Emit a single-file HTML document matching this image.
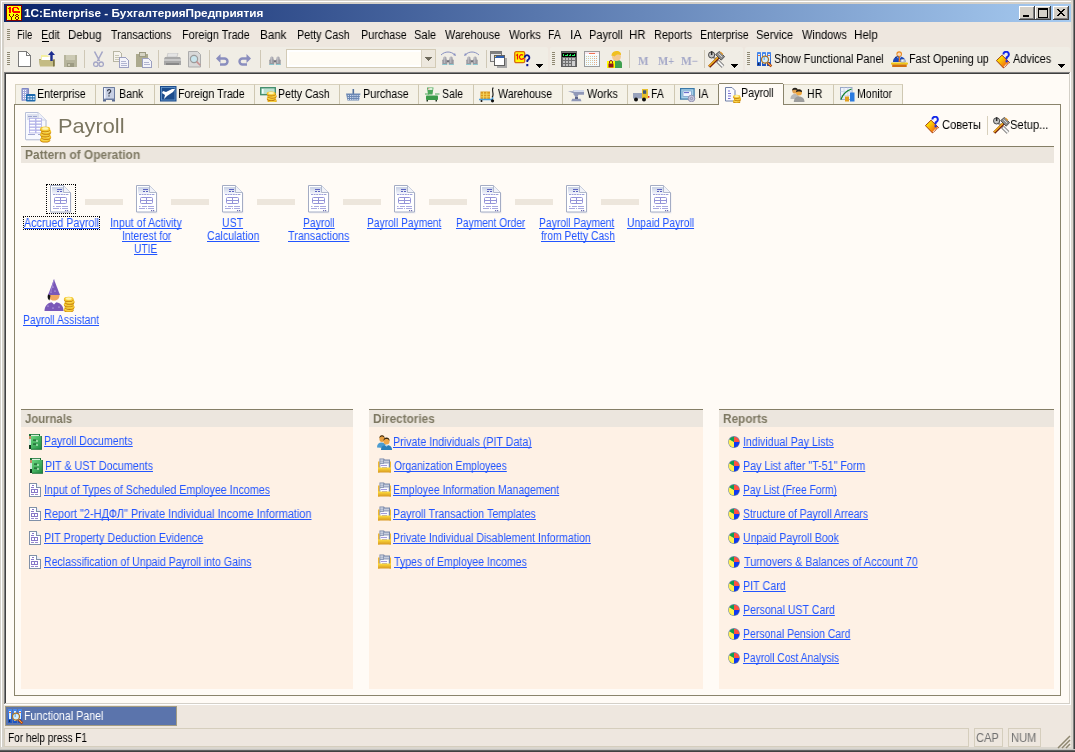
<!DOCTYPE html>
<html><head><meta charset="utf-8"><title>1C:Enterprise</title>
<style>
html,body{margin:0;padding:0;width:1075px;height:752px;overflow:hidden;background:#D4D0C8}
body>div,body>svg{position:absolute}
.t{font-family:"Liberation Sans", sans-serif;white-space:pre;transform-origin:0 0;will-change:transform;text-decoration-skip-ink:none}
</style></head><body>
<div style="left:0px;top:0px;width:1075px;height:752px;background:#D4D0C8"></div>
<div style="left:1px;top:1px;width:1073px;height:750px;background:#FFFFFF"></div>
<div style="left:2px;top:2px;width:1071px;height:748px;background:#D4D0C8"></div>
<div style="left:4px;top:4px;width:1067px;height:743px;background:#EEE7DF"></div>
<div style="left:1071px;top:1px;width:2px;height:749px;background:#DAD6CE"></div>
<div style="left:1px;top:747px;width:1072px;height:2px;background:#DAD6CE"></div>
<div style="left:1073px;top:0px;width:1px;height:752px;background:#808080"></div>
<div style="left:1074px;top:0px;width:1px;height:752px;background:#404040"></div>
<div style="left:0px;top:749px;width:1075px;height:1px;background:#C4C4C0"></div>
<div style="left:0px;top:750px;width:1075px;height:1px;background:#606060"></div>
<div style="left:0px;top:751px;width:1075px;height:1px;background:#404040"></div>
<div style="left:4px;top:4px;width:1067px;height:18px;background:linear-gradient(to right,#0A246A,#A6CAF0)"></div>
<svg style="left:6px;top:5px" width="16" height="16" viewBox="0 0 16 16" shape-rendering="crispEdges"><rect x="0" y="0" width="16" height="16" fill="#800000"/><rect x="1" y="1" width="14" height="14" fill="#FFFF00"/><rect x="1" y="1" width="1" height="1" fill="#C8D8E8"/><rect x="14" y="1" width="1" height="1" fill="#C8D8E8"/><rect x="1" y="14" width="1" height="1" fill="#C8D8E8"/><rect x="14" y="14" width="1" height="1" fill="#C8D8E8"/><rect x="2" y="3" width="1" height="1" fill="#FF0000"/><rect x="3" y="2" width="2" height="6" fill="#FF0000"/><rect x="7" y="2" width="5" height="1" fill="#FF0000"/><rect x="6" y="3" width="2" height="3" fill="#FF0000"/><rect x="11" y="3" width="2" height="1" fill="#FF0000"/><rect x="12" y="4" width="1" height="1" fill="#FF0000"/><rect x="6" y="6" width="8" height="1" fill="#FF0000"/><rect x="7" y="7" width="7" height="1" fill="#FF0000"/><rect x="3" y="9" width="1" height="2" fill="#800000"/><rect x="7" y="9" width="1" height="2" fill="#800000"/><rect x="4" y="11" width="1" height="1" fill="#800000"/><rect x="6" y="11" width="1" height="1" fill="#800000"/><rect x="5" y="12" width="1" height="3" fill="#800000"/><rect x="10" y="9" width="2" height="1" fill="#800000"/><rect x="9" y="10" width="1" height="1" fill="#800000"/><rect x="12" y="10" width="1" height="1" fill="#800000"/><rect x="10" y="11" width="2" height="1" fill="#800000"/><rect x="9" y="12" width="1" height="2" fill="#800000"/><rect x="12" y="12" width="1" height="2" fill="#800000"/><rect x="10" y="14" width="2" height="1" fill="#800000"/></svg>
<div class="t" style="left:23.93px;top:7px;font-size:11px;font-weight:700;line-height:13px;transform:scaleX(1.0685);color:#FFFFFF;">1C:Enterprise - БухгалтерияПредприятия</div>
<div style="left:1019px;top:6px;width:16px;height:14px;background:#404040"></div>
<div style="left:1019px;top:6px;width:15px;height:13px;background:#FFFFFF"></div>
<div style="left:1020px;top:7px;width:14px;height:12px;background:#808080"></div>
<div style="left:1020px;top:7px;width:13px;height:11px;background:#D4D0C8"></div>
<div style="left:1035px;top:6px;width:16px;height:14px;background:#404040"></div>
<div style="left:1035px;top:6px;width:15px;height:13px;background:#FFFFFF"></div>
<div style="left:1036px;top:7px;width:14px;height:12px;background:#808080"></div>
<div style="left:1036px;top:7px;width:13px;height:11px;background:#D4D0C8"></div>
<div style="left:1053px;top:6px;width:16px;height:14px;background:#404040"></div>
<div style="left:1053px;top:6px;width:15px;height:13px;background:#FFFFFF"></div>
<div style="left:1054px;top:7px;width:14px;height:12px;background:#808080"></div>
<div style="left:1054px;top:7px;width:13px;height:11px;background:#D4D0C8"></div>
<div style="left:1023px;top:15px;width:6px;height:2px;background:#000"></div>
<svg style="left:1035px;top:6px" width="16" height="14" viewBox="0 0 16 14" shape-rendering="crispEdges"><rect x="3" y="2" width="9" height="9" fill="none" stroke="#000" stroke-width="1" transform="translate(0.5 0.5)"/><rect x="3" y="2" width="10" height="2" fill="#000"/></svg>
<svg style="left:1053px;top:6px" width="16" height="14" viewBox="0 0 16 14" shape-rendering="crispEdges"><rect x="4" y="3" width="1" height="1" fill="#000"/><rect x="5" y="3" width="1" height="1" fill="#000"/><rect x="10" y="3" width="1" height="1" fill="#000"/><rect x="11" y="3" width="1" height="1" fill="#000"/><rect x="5" y="4" width="1" height="1" fill="#000"/><rect x="6" y="4" width="1" height="1" fill="#000"/><rect x="9" y="4" width="1" height="1" fill="#000"/><rect x="10" y="4" width="1" height="1" fill="#000"/><rect x="6" y="5" width="1" height="1" fill="#000"/><rect x="7" y="5" width="1" height="1" fill="#000"/><rect x="8" y="5" width="1" height="1" fill="#000"/><rect x="9" y="5" width="1" height="1" fill="#000"/><rect x="7" y="6" width="1" height="1" fill="#000"/><rect x="8" y="6" width="1" height="1" fill="#000"/><rect x="6" y="7" width="1" height="1" fill="#000"/><rect x="7" y="7" width="1" height="1" fill="#000"/><rect x="8" y="7" width="1" height="1" fill="#000"/><rect x="9" y="7" width="1" height="1" fill="#000"/><rect x="5" y="8" width="1" height="1" fill="#000"/><rect x="6" y="8" width="1" height="1" fill="#000"/><rect x="9" y="8" width="1" height="1" fill="#000"/><rect x="10" y="8" width="1" height="1" fill="#000"/><rect x="4" y="9" width="1" height="1" fill="#000"/><rect x="5" y="9" width="1" height="1" fill="#000"/><rect x="10" y="9" width="1" height="1" fill="#000"/><rect x="11" y="9" width="1" height="1" fill="#000"/></svg>
<svg style="left:7px;top:29px" width="3" height="12" viewBox="0 0 3 12" shape-rendering="crispEdges"><rect x="0" y="0" width="3" height="1" fill="#8E8872"/><rect x="0" y="2" width="3" height="1" fill="#8E8872"/><rect x="0" y="4" width="3" height="1" fill="#8E8872"/><rect x="0" y="6" width="3" height="1" fill="#8E8872"/><rect x="0" y="8" width="3" height="1" fill="#8E8872"/><rect x="0" y="10" width="3" height="1" fill="#8E8872"/></svg>
<div class="t" style="left:17.21px;top:28px;font-size:12px;font-weight:400;line-height:14px;transform:scaleX(0.7889);color:#000;">File</div>
<div class="t" style="left:41.09px;top:28px;font-size:12px;font-weight:400;line-height:14px;transform:scaleX(0.9100);color:#000;">Edit</div>
<div class="t" style="left:68.05px;top:28px;font-size:12px;font-weight:400;line-height:14px;transform:scaleX(0.9471);color:#000;">Debug</div>
<div class="t" style="left:111.00px;top:28px;font-size:12px;font-weight:400;line-height:14px;transform:scaleX(0.8853);color:#000;">Transactions</div>
<div class="t" style="left:182.09px;top:28px;font-size:12px;font-weight:400;line-height:14px;transform:scaleX(0.9068);color:#000;">Foreign Trade</div>
<div class="t" style="left:260.03px;top:28px;font-size:12px;font-weight:400;line-height:14px;transform:scaleX(0.9692);color:#000;">Bank</div>
<div class="t" style="left:297.10px;top:28px;font-size:12px;font-weight:400;line-height:14px;transform:scaleX(0.8982);color:#000;">Petty Cash</div>
<div class="t" style="left:361.10px;top:28px;font-size:12px;font-weight:400;line-height:14px;transform:scaleX(0.9020);color:#000;">Purchase</div>
<div class="t" style="left:414.08px;top:28px;font-size:12px;font-weight:400;line-height:14px;transform:scaleX(0.9217);color:#000;">Sale</div>
<div class="t" style="left:445.00px;top:28px;font-size:12px;font-weight:400;line-height:14px;transform:scaleX(0.9049);color:#000;">Warehouse</div>
<div class="t" style="left:509.00px;top:28px;font-size:12px;font-weight:400;line-height:14px;transform:scaleX(0.9455);color:#000;">Works</div>
<div class="t" style="left:548.13px;top:28px;font-size:12px;font-weight:400;line-height:14px;transform:scaleX(0.8714);color:#000;">FA</div>
<div class="t" style="left:569.98px;top:28px;font-size:12px;font-weight:400;line-height:14px;transform:scaleX(1.0200);color:#000;">IA</div>
<div class="t" style="left:589.08px;top:28px;font-size:12px;font-weight:400;line-height:14px;transform:scaleX(0.9200);color:#000;">Payroll</div>
<div class="t" style="left:629.05px;top:28px;font-size:12px;font-weight:400;line-height:14px;transform:scaleX(0.9500);color:#000;">HR</div>
<div class="t" style="left:654.09px;top:28px;font-size:12px;font-weight:400;line-height:14px;transform:scaleX(0.9073);color:#000;">Reports</div>
<div class="t" style="left:700.11px;top:28px;font-size:12px;font-weight:400;line-height:14px;transform:scaleX(0.8906);color:#000;">Enterprise</div>
<div class="t" style="left:756.07px;top:28px;font-size:12px;font-weight:400;line-height:14px;transform:scaleX(0.9282);color:#000;">Service</div>
<div class="t" style="left:802.00px;top:28px;font-size:12px;font-weight:400;line-height:14px;transform:scaleX(0.9208);color:#000;">Windows</div>
<div class="t" style="left:854.03px;top:28px;font-size:12px;font-weight:400;line-height:14px;transform:scaleX(0.9652);color:#000;">Help</div>
<div style="left:42px;top:41px;width:7px;height:1px;background:#000"></div>
<div style="left:4px;top:47px;width:544px;height:24px;background:#F0EDE5;border-radius:2px"></div>
<div style="left:550px;top:47px;width:193px;height:24px;background:#F0EDE5;border-radius:2px"></div>
<div style="left:745px;top:47px;width:325px;height:24px;background:#F0EDE5;border-radius:2px"></div>
<svg style="left:7px;top:52px" width="3" height="14" viewBox="0 0 3 14" shape-rendering="crispEdges"><rect x="0" y="0" width="3" height="1" fill="#8E8872"/><rect x="0" y="2" width="3" height="1" fill="#8E8872"/><rect x="0" y="4" width="3" height="1" fill="#8E8872"/><rect x="0" y="6" width="3" height="1" fill="#8E8872"/><rect x="0" y="8" width="3" height="1" fill="#8E8872"/><rect x="0" y="10" width="3" height="1" fill="#8E8872"/><rect x="0" y="12" width="3" height="1" fill="#8E8872"/></svg>
<svg style="left:552px;top:52px" width="3" height="14" viewBox="0 0 3 14" shape-rendering="crispEdges"><rect x="0" y="0" width="3" height="1" fill="#8E8872"/><rect x="0" y="2" width="3" height="1" fill="#8E8872"/><rect x="0" y="4" width="3" height="1" fill="#8E8872"/><rect x="0" y="6" width="3" height="1" fill="#8E8872"/><rect x="0" y="8" width="3" height="1" fill="#8E8872"/><rect x="0" y="10" width="3" height="1" fill="#8E8872"/><rect x="0" y="12" width="3" height="1" fill="#8E8872"/></svg>
<svg style="left:747px;top:52px" width="3" height="14" viewBox="0 0 3 14" shape-rendering="crispEdges"><rect x="0" y="0" width="3" height="1" fill="#8E8872"/><rect x="0" y="2" width="3" height="1" fill="#8E8872"/><rect x="0" y="4" width="3" height="1" fill="#8E8872"/><rect x="0" y="6" width="3" height="1" fill="#8E8872"/><rect x="0" y="8" width="3" height="1" fill="#8E8872"/><rect x="0" y="10" width="3" height="1" fill="#8E8872"/><rect x="0" y="12" width="3" height="1" fill="#8E8872"/></svg>
<div style="left:4px;top:72px;width:1067px;height:1px;background:#808080"></div>
<div style="left:4px;top:73px;width:1067px;height:1px;background:#404040"></div>
<svg style="left:18px;top:51px" width="13" height="16" viewBox="0 0 13 16" shape-rendering="crispEdges"><path d="M0.5 0.5h8l3.5 3.5v11.5H0.5z" fill="#FFF" stroke="#7A7A7A"/><path d="M8.5 0.5v3.5h3.5" fill="none" stroke="#7A7A7A"/></svg>
<svg style="left:39px;top:51px" width="17" height="16" viewBox="0 0 17 16"><path d="M0 8h13v7H1z" fill="#A8A070"/><path d="M2 4h6l2 2h3v3H2z" fill="#F4F0A0"/><path d="M3 6h8v4H3z" fill="#FFFFFF"/><path d="M0 9h14l2 -1v7l-2 0.5H1z" fill="#C4BC84"/><path d="M14 8.5h1.6v7H14z" fill="#7C7448"/><path d="M12.5 0l3.5 4h-2.3v6h-2.4V4H9z" fill="#1C2C90"/></svg>
<svg style="left:64px;top:55px" width="13" height="13" viewBox="0 0 13 13" shape-rendering="crispEdges"><rect x="0" y="0" width="13" height="12" fill="#B6B49C"/><rect x="2" y="0" width="9" height="5" fill="#CCCAB4"/><rect x="3" y="8" width="7" height="4" fill="#9C9A82"/><rect x="4" y="9" width="2" height="2" fill="#CCCAB4"/></svg>
<svg style="left:93px;top:51px" width="11" height="17" viewBox="0 0 11 17"><path d="M1.5 0.5l5 9.5M9.5 0.5l-5 9.5" stroke="#A4A6C6" stroke-width="1.6"/><circle cx="2.8" cy="13.2" r="2.2" fill="none" stroke="#A4A6C6" stroke-width="1.3"/><circle cx="8.2" cy="13.2" r="2.2" fill="none" stroke="#A4A6C6" stroke-width="1.3"/></svg>
<svg style="left:113px;top:51px" width="17" height="17" viewBox="0 0 17 17" shape-rendering="crispEdges"><path d="M0.5 0.5h6l2 2v8h-8z" fill="#F6F4EE" stroke="#B8B6A4"/><path d="M2 4h4M2 6h5M2 8h5" stroke="#C8C6B4"/><path d="M6.5 6.5h6l3 3v7h-9z" fill="#F4F4FA" stroke="#9CA0C0"/><path d="M8 10h5M8 12h6M8 14h6" stroke="#B0B4D0"/></svg>
<svg style="left:136px;top:51px" width="17" height="17" viewBox="0 0 17 17" shape-rendering="crispEdges"><rect x="0" y="3" width="12" height="13" rx="1" fill="#ACAA8E"/><rect x="3" y="1" width="6" height="4" fill="#D6D4C4" stroke="#9C9A82"/><path d="M6.5 7.5h6l3 3v6h-9z" fill="#F4F4FA" stroke="#9CA0C0"/><path d="M8 11h5M8 13h6" stroke="#B0B4D0"/></svg>
<svg style="left:164px;top:53px" width="17" height="14" viewBox="0 0 17 14"><path d="M4 0h10l-1 4H3z" fill="#E4E4E4" stroke="#B8B8B8" stroke-width="0.6"/><path d="M1 4h15l1 2v6H0V6z" fill="#A8A8A8"/><rect x="0" y="6" width="17" height="2" fill="#C8C8C8"/><rect x="2" y="10" width="13" height="2" fill="#888888"/></svg>
<svg style="left:188px;top:51px" width="14" height="17" viewBox="0 0 14 17"><path d="M0.5 0.5h9l3 3v12.5H0.5z" fill="#D8D8D8" stroke="#ACACAC"/><circle cx="6" cy="8" r="3.6" fill="#C8E4EC" stroke="#9A9A9A" stroke-width="1.2"/><path d="M8.6 10.6l3.6 3.6" stroke="#C89090" stroke-width="1.6"/></svg>
<svg style="left:216px;top:53px" width="13" height="13" viewBox="0 0 13 13"><path d="M3 5.5h5.5a3 3 0 0 1 0 6H4" stroke="#8A8EBE" stroke-width="2.4" fill="none"/><path d="M0 5.5L4.5 1v9z" fill="#8A8EBE"/></svg>
<svg style="left:238px;top:53px" width="13" height="13" viewBox="0 0 13 13"><path d="M10 5.5H4.5a3 3 0 0 0 0 6H9" stroke="#8A8EBE" stroke-width="2.4" fill="none"/><path d="M13 5.5L8.5 1v9z" fill="#8A8EBE"/></svg>
<svg style="left:269px;top:56px" width="12" height="9" viewBox="0 0 12 9"><path d="M1.3 4V2a1.6 1.6 0 0 1 3.2 0V4z" fill="#A4A4AC"/><path d="M7.5 4V2a1.6 1.6 0 0 1 3.2 0V4z" fill="#A4A4AC"/><rect x="0.3" y="3.5" width="5" height="5.5" rx="0.8" fill="#98989F"/><rect x="6.7" y="3.5" width="5" height="5.5" rx="0.8" fill="#98989F"/><rect x="5" y="4.3" width="2" height="2" fill="#707078"/><rect x="1.8" y="1" width="1.4" height="6" fill="#C4C4CC" opacity="0.7"/><rect x="8" y="1" width="1.4" height="6" fill="#C4C4CC" opacity="0.7"/><rect x="0.3" y="8" width="4.5" height="1" fill="#88C8D0"/><rect x="7.2" y="8" width="4.5" height="1" fill="#88C8D0"/></svg>
<svg style="left:442px;top:56px" width="12" height="9" viewBox="0 0 12 9"><path d="M1.3 4V2a1.6 1.6 0 0 1 3.2 0V4z" fill="#A4A4AC"/><path d="M7.5 4V2a1.6 1.6 0 0 1 3.2 0V4z" fill="#A4A4AC"/><rect x="0.3" y="3.5" width="5" height="5.5" rx="0.8" fill="#98989F"/><rect x="6.7" y="3.5" width="5" height="5.5" rx="0.8" fill="#98989F"/><rect x="5" y="4.3" width="2" height="2" fill="#707078"/><rect x="1.8" y="1" width="1.4" height="6" fill="#C4C4CC" opacity="0.7"/><rect x="8" y="1" width="1.4" height="6" fill="#C4C4CC" opacity="0.7"/><rect x="0.3" y="8" width="4.5" height="1" fill="#88C8D0"/><rect x="7.2" y="8" width="4.5" height="1" fill="#88C8D0"/></svg>
<svg style="left:466px;top:56px" width="12" height="9" viewBox="0 0 12 9"><path d="M1.3 4V2a1.6 1.6 0 0 1 3.2 0V4z" fill="#A4A4AC"/><path d="M7.5 4V2a1.6 1.6 0 0 1 3.2 0V4z" fill="#A4A4AC"/><rect x="0.3" y="3.5" width="5" height="5.5" rx="0.8" fill="#98989F"/><rect x="6.7" y="3.5" width="5" height="5.5" rx="0.8" fill="#98989F"/><rect x="5" y="4.3" width="2" height="2" fill="#707078"/><rect x="1.8" y="1" width="1.4" height="6" fill="#C4C4CC" opacity="0.7"/><rect x="8" y="1" width="1.4" height="6" fill="#C4C4CC" opacity="0.7"/><rect x="0.3" y="8" width="4.5" height="1" fill="#88C8D0"/><rect x="7.2" y="8" width="4.5" height="1" fill="#88C8D0"/></svg>
<svg style="left:440px;top:50px" width="17" height="7" viewBox="0 0 17 7"><path d="M1 5c4-4 10-4 14 0" stroke="#8890C0" stroke-width="1" fill="none"/><path d="M16 6l-3-1 2-2z" fill="#8890C0"/></svg>
<svg style="left:463px;top:50px" width="17" height="7" viewBox="0 0 17 7"><path d="M2 5c4-4 10-4 14 0" stroke="#8890C0" stroke-width="1" fill="none"/><path d="M1 6l3-1-2-2z" fill="#8890C0"/></svg>
<div style="left:286px;top:49px;width:150px;height:19px;background:#D3CBB6"></div>
<div style="left:287px;top:50px;width:148px;height:17px;background:#FFFFFF"></div>
<div style="left:289px;top:52px;width:132px;height:13px;background:#FFFCF5"></div>
<div style="left:421px;top:50px;width:14px;height:17px;background:#EDE8DE;border-left:1px solid #D8D2C2;box-sizing:border-box"></div>
<svg style="left:425px;top:57px" width="7" height="4" viewBox="0 0 7 4" shape-rendering="crispEdges"><path d="M0 0h7v1H0zM1 1h5v1H1zM2 2h3v1H2zM3 3h1v1H3z" fill="#6E6A5C"/></svg>
<svg style="left:490px;top:51px" width="18" height="17" viewBox="0 0 18 17" shape-rendering="crispEdges"><rect x="0" y="0" width="11" height="10" fill="#E8E8E8" stroke="#7A7A7A"/><rect x="0.5" y="0.5" width="10" height="2" fill="#808080"/><rect x="4.5" y="4.5" width="10" height="10" fill="#FFFFFF" stroke="#606060"/><rect x="5" y="5" width="9" height="2" fill="#3060B0"/><rect x="5" y="5" width="1" height="1" fill="#F0D040"/><rect x="15" y="7" width="2" height="9" fill="#A8A8A8"/><rect x="7" y="15" width="10" height="2" fill="#A8A8A8"/></svg>
<svg style="left:514px;top:51px" width="18" height="17" viewBox="0 0 18 17"><rect x="0.7" y="0.7" width="10" height="11" rx="1.5" fill="#FFF800" stroke="#D86A10" stroke-width="1.3"/><path d="M2.2 4.5l1.3-1v5" stroke="#F01010" stroke-width="1.2" fill="none"/><path d="M9 4.3a2.2 2.2 0 1 0 0 3.4H10" stroke="#F01010" stroke-width="1.2" fill="none"/><path d="M10.6 6.8a2.4 2.4 0 1 1 4 1.6l-1.3 1.1v1.6" stroke="#0A1890" stroke-width="1.8" fill="none"/><rect x="12.3" y="13" width="2" height="2.2" fill="#0A1890"/></svg>
<svg style="left:536px;top:64px" width="8" height="5" viewBox="0 0 8 5" shape-rendering="crispEdges"><path d="M0 0h7v1H0zM1 1h5v1H1zM2 2h3v1H2zM3 3h1v1H3z" fill="#000"/><path d="M3 4h1v1H3z" fill="#FFF"/></svg>
<svg style="left:561px;top:51px" width="16" height="16" viewBox="0 0 16 16" shape-rendering="crispEdges"><rect x="0" y="0" width="16" height="16" fill="#5C5C5C"/><rect x="1" y="1" width="14" height="14" fill="#707070"/><rect x="1" y="2" width="14" height="4" fill="#000"/><path d="M2 3h1v2H2zM4 4h2v1H4zM6 3h1v2H6zM8 4h1v1H8zM9 3h1v2H9zM11 4h2v1h-2zM13 3h1v2h-1z" fill="#20F060"/><rect x="2" y="7" width="2" height="2" fill="#C0C0C0"/><rect x="5" y="7" width="2" height="2" fill="#C0C0C0"/><rect x="8" y="7" width="2" height="2" fill="#C0C0C0"/><rect x="2" y="10" width="2" height="2" fill="#C0C0C0"/><rect x="5" y="10" width="2" height="2" fill="#C0C0C0"/><rect x="8" y="10" width="2" height="2" fill="#C0C0C0"/><rect x="2" y="13" width="2" height="2" fill="#C0C0C0"/><rect x="5" y="13" width="2" height="2" fill="#C0C0C0"/><rect x="8" y="13" width="2" height="2" fill="#C0C0C0"/><rect x="11" y="7" width="3" height="2" fill="#C0C0C0"/><rect x="11" y="10" width="3" height="5" fill="#D0D0D0"/></svg>
<svg style="left:584px;top:51px" width="16" height="16" viewBox="0 0 16 16" shape-rendering="crispEdges"><rect x="0.5" y="0.5" width="15" height="15" fill="#FFFFFF" stroke="#9A9A9A"/><rect x="1" y="1" width="14" height="2" fill="#F8E8F0"/><path d="M5 2h6" stroke="#F07050"/><rect x="2" y="5" width="1" height="1" fill="#E0B070"/><rect x="4" y="5" width="1" height="1" fill="#E0B070"/><rect x="6" y="5" width="1" height="1" fill="#E0B070"/><rect x="8" y="5" width="1" height="1" fill="#E0B070"/><rect x="10" y="5" width="1" height="1" fill="#F08040"/><rect x="12" y="5" width="1" height="1" fill="#F08040"/><rect x="2" y="7" width="1" height="1" fill="#E0B070"/><rect x="4" y="7" width="1" height="1" fill="#E0B070"/><rect x="6" y="7" width="1" height="1" fill="#E0B070"/><rect x="8" y="7" width="1" height="1" fill="#E0B070"/><rect x="10" y="7" width="1" height="1" fill="#F08040"/><rect x="12" y="7" width="1" height="1" fill="#F08040"/><rect x="2" y="9" width="1" height="1" fill="#E0B070"/><rect x="4" y="9" width="1" height="1" fill="#E0B070"/><rect x="6" y="9" width="1" height="1" fill="#E0B070"/><rect x="8" y="9" width="1" height="1" fill="#E0B070"/><rect x="10" y="9" width="1" height="1" fill="#F08040"/><rect x="12" y="9" width="1" height="1" fill="#F08040"/><rect x="2" y="11" width="1" height="1" fill="#E0B070"/><rect x="4" y="11" width="1" height="1" fill="#E0B070"/><rect x="6" y="11" width="1" height="1" fill="#E0B070"/><rect x="8" y="11" width="1" height="1" fill="#E0B070"/><rect x="10" y="11" width="1" height="1" fill="#F08040"/><rect x="12" y="11" width="1" height="1" fill="#F08040"/><rect x="2" y="13" width="1" height="1" fill="#E0B070"/><rect x="4" y="13" width="1" height="1" fill="#E0B070"/><rect x="6" y="13" width="1" height="1" fill="#E0B070"/><rect x="8" y="13" width="1" height="1" fill="#E0B070"/><rect x="10" y="13" width="1" height="1" fill="#F08040"/><rect x="12" y="13" width="1" height="1" fill="#F08040"/><rect x="1" y="4" width="14" height="11" fill="#D8F4FF" opacity="0.35"/></svg>
<svg style="left:607px;top:51px" width="15" height="17" viewBox="0 0 15 17"><path d="M5 13c0-3 2-4 5-4s5 1 5 4v4H5z" fill="#40A050"/><circle cx="9.5" cy="5.5" r="4.5" fill="#F4C890"/><path d="M4.5 5c0-4 3-5 5.5-5s4.5 2 4 4c-2-1-5-1-6.5 1.5-1 -1-2-1-3-0.5z" fill="#F0C020"/><rect x="0" y="10" width="8" height="7" fill="#FFFF00"/><rect x="1.5" y="12.5" width="5" height="4" fill="#901818"/><path d="M2.5 12.5v-1.5a1.5 1.5 0 0 1 3 0v1.5" stroke="#901818" stroke-width="1" fill="none"/></svg>
<div class="t" style="left:638.00px;top:54px;font-size:12px;font-weight:700;line-height:14px;transform:scaleX(0.9273);color:#A4A8C8;font-family:Liberation Serif,serif">M</div>
<div class="t" style="left:658.00px;top:54px;font-size:12px;font-weight:700;line-height:14px;transform:scaleX(0.9000);color:#A4A8C8;font-family:Liberation Serif,serif">M+</div>
<div class="t" style="left:681.00px;top:54px;font-size:12px;font-weight:700;line-height:14px;transform:scaleX(0.9529);color:#A4A8C8;font-family:Liberation Serif,serif">M−</div>
<svg style="left:708px;top:51px" width="17" height="17" viewBox="0 0 17 17"><path d="M9.5 10l5.5 5.5" stroke="#585858" stroke-width="3.6"/><path d="M9.5 10l5.5 5.5" stroke="#F4F4F4" stroke-width="2.1"/><path d="M5 5.5l5 5" stroke="#9A9A9A" stroke-width="2.2"/><circle cx="3.6" cy="3.9" r="3.1" fill="#C4C4C4" stroke="#4A4A4A" stroke-width="1"/><rect x="2.9" y="0.2" width="1.5" height="3.8" fill="#2A2A2A"/><path d="M1.2 15.8L10.8 6.2" stroke="#701808" stroke-width="3"/><path d="M1 15.2L10.4 5.8" stroke="#E8A820" stroke-width="1.7"/><path d="M7.6 3.6l3.8-3.2 5.2 5.2-3.4 3.6z" fill="#8C8C8C" stroke="#3A3A3A" stroke-width="0.8"/><path d="M10.5 2.5l3.5 3.5" stroke="#D8D8D8" stroke-width="1"/><path d="M12.3 0.9l2.6 2.6" stroke="#E09A30" stroke-width="1.3"/></svg>
<svg style="left:731px;top:64px" width="8" height="5" viewBox="0 0 8 5" shape-rendering="crispEdges"><path d="M0 0h7v1H0zM1 1h5v1H1zM2 2h3v1H2zM3 3h1v1H3z" fill="#000"/><path d="M3 4h1v1H3z" fill="#FFF"/></svg>
<svg style="left:757px;top:52px" width="16" height="16" viewBox="0 0 16 16"><defs><linearGradient id="g1" x1="0" y1="0" x2="0" y2="1"><stop offset="0" stop-color="#4A8CF0"/><stop offset="1" stop-color="#1A50C0"/></linearGradient></defs><rect x="0" y="0" width="4" height="14" rx="0.6" fill="url(#g1)"/><rect x="5" y="0" width="4" height="14" rx="0.6" fill="url(#g1)"/><rect x="10" y="0" width="4" height="14" rx="0.6" fill="url(#g1)"/><rect x="1" y="2" width="2" height="8" fill="#D8F0FF"/><rect x="6" y="2" width="2" height="10" fill="#D8F0FF"/><rect x="11" y="2" width="2" height="8" fill="#D8F0FF"/><rect x="1" y="3" width="2" height="1" fill="#E07040"/><rect x="11" y="3" width="2" height="1" fill="#E07040"/><circle cx="1.5" cy="12" r="0.8" fill="#101010"/><path d="M10.8 10.8l3.6 3.6" stroke="#902800" stroke-width="2.4"/><path d="M11 11l3.2 3.2" stroke="#F8A040" stroke-width="1.2"/><circle cx="8" cy="7.6" r="3.5" fill="#D0ECFF" stroke="#B07420" stroke-width="1.3"/><path d="M7.2 5v3" stroke="#4090D0" stroke-width="0.8"/></svg>
<div class="t" style="left:774.11px;top:52px;font-size:12px;font-weight:400;line-height:14px;transform:scaleX(0.8942);color:#000;">Show Functional Panel</div>
<svg style="left:891px;top:51px" width="17" height="16" viewBox="0 0 17 16"><path d="M2 11c0-4 2.5-5.5 6-5.5s6.5 1.5 6.5 5.5z" fill="#1C48B8"/><path d="M4 6.5c1.2-0.6 2.6-1 4-1" stroke="#0C2880" stroke-width="1" fill="none"/><path d="M7 5.8h2.2l-0.4 1 0.5 4h-1.8l0.5-4z" fill="#F07818"/><path d="M6.2 5.8l1 1.5M10 5.8l-1 1.5" stroke="#A8D0F8" stroke-width="0.8"/><circle cx="8.2" cy="3" r="2.8" fill="#E88A20"/><circle cx="8.2" cy="3.2" r="1.8" fill="#F8D8B8"/><rect x="9.5" y="8" width="5" height="4" rx="1.5" fill="#B0B8C8"/><rect x="10.5" y="9" width="2" height="1.5" fill="#F0F4FF"/><rect x="0" y="11.5" width="17" height="2.2" rx="1" fill="#F0C818"/><rect x="1.2" y="13.5" width="14.5" height="2.5" fill="#D07010"/></svg>
<div class="t" style="left:909.10px;top:52px;font-size:12px;font-weight:400;line-height:14px;transform:scaleX(0.8989);color:#000;">Fast Opening up</div>
<svg style="left:996px;top:51px" width="15" height="18" viewBox="0 0 15 18"><defs><linearGradient id="advg996" x1="0" y1="0" x2="1" y2="1"><stop offset="0.15" stop-color="#FFF200"/><stop offset="0.85" stop-color="#F05A10"/></linearGradient></defs><path d="M0.4 9.6L6 4.2l7.6 7.4-6.2 5.3z" fill="url(#advg996)" stroke="#9A3008" stroke-width="0.9"/><path d="M8 15.6l4.8-4" stroke="#FFFFFF" stroke-width="1.2" stroke-dasharray="0.9 0.8"/><path d="M7.4 3.4a2.7 2.7 0 1 1 4.5 2l-1.3 1.1v1.7" stroke="#1428E8" stroke-width="2" fill="none"/><rect x="9.6" y="9.2" width="2.1" height="2.1" fill="#1428E8"/></svg>
<div class="t" style="left:1013.00px;top:52px;font-size:12px;font-weight:400;line-height:14px;transform:scaleX(0.9095);color:#000;">Advices</div>
<svg style="left:1058px;top:64px" width="8" height="5" viewBox="0 0 8 5" shape-rendering="crispEdges"><path d="M0 0h7v1H0zM1 1h5v1H1zM2 2h3v1H2zM3 3h1v1H3z" fill="#000"/><path d="M3 4h1v1H3z" fill="#FFF"/></svg>
<div style="left:84px;top:50px;width:1px;height:18px;background:#CFC8B6"></div>
<div style="left:158px;top:50px;width:1px;height:18px;background:#CFC8B6"></div>
<div style="left:209px;top:50px;width:1px;height:18px;background:#CFC8B6"></div>
<div style="left:260px;top:50px;width:1px;height:18px;background:#CFC8B6"></div>
<div style="left:486px;top:50px;width:1px;height:18px;background:#CFC8B6"></div>
<div style="left:629px;top:50px;width:1px;height:18px;background:#CFC8B6"></div>
<div style="left:704px;top:50px;width:1px;height:18px;background:#CFC8B6"></div>
<div style="left:4px;top:72px;width:1px;height:633px;background:#808080"></div>
<div style="left:5px;top:73px;width:1px;height:631px;background:#404040"></div>
<div style="left:4px;top:704px;width:1067px;height:1px;background:#FFFFFF"></div>
<div style="left:5px;top:703px;width:1065px;height:1px;background:#D4D0C8"></div>
<div style="left:1070px;top:72px;width:1px;height:633px;background:#FFFFFF"></div>
<div style="left:1069px;top:73px;width:1px;height:631px;background:#D4D0C8"></div>
<div style="left:6px;top:74px;width:1063px;height:629px;background:#FFFBF6"></div>
<div style="left:14px;top:104px;width:1047px;height:592px;border:1px solid #8A846C;box-sizing:border-box;background:#FFFBF6"></div>
<div style="left:16px;top:84px;width:80px;height:20px;background:#F5F2E8;border-top:1px solid #D8D1BD;border-right:1px solid #CFC8B2;box-sizing:border-box"></div>
<div class="t" style="left:37.11px;top:87px;font-size:12px;font-weight:400;line-height:14px;transform:scaleX(0.8906);color:#000;">Enterprise</div>
<div style="left:96px;top:84px;width:59px;height:20px;background:#F5F2E8;border-top:1px solid #D8D1BD;border-right:1px solid #CFC8B2;box-sizing:border-box"></div>
<div class="t" style="left:119.11px;top:87px;font-size:12px;font-weight:400;line-height:14px;transform:scaleX(0.8923);color:#000;">Bank</div>
<div style="left:155px;top:84px;width:100px;height:20px;background:#F5F2E8;border-top:1px solid #D8D1BD;border-right:1px solid #CFC8B2;box-sizing:border-box"></div>
<div class="t" style="left:178.11px;top:87px;font-size:12px;font-weight:400;line-height:14px;transform:scaleX(0.8932);color:#000;">Foreign Trade</div>
<div style="left:255px;top:84px;width:85px;height:20px;background:#F5F2E8;border-top:1px solid #D8D1BD;border-right:1px solid #CFC8B2;box-sizing:border-box"></div>
<div class="t" style="left:278.12px;top:87px;font-size:12px;font-weight:400;line-height:14px;transform:scaleX(0.8807);color:#000;">Petty Cash</div>
<div style="left:340px;top:84px;width:79px;height:20px;background:#F5F2E8;border-top:1px solid #D8D1BD;border-right:1px solid #CFC8B2;box-sizing:border-box"></div>
<div class="t" style="left:363.10px;top:87px;font-size:12px;font-weight:400;line-height:14px;transform:scaleX(0.9020);color:#000;">Purchase</div>
<div style="left:419px;top:84px;width:55px;height:20px;background:#F5F2E8;border-top:1px solid #D8D1BD;border-right:1px solid #CFC8B2;box-sizing:border-box"></div>
<div class="t" style="left:442.12px;top:87px;font-size:12px;font-weight:400;line-height:14px;transform:scaleX(0.8783);color:#000;">Sale</div>
<div style="left:474px;top:84px;width:89px;height:20px;background:#F5F2E8;border-top:1px solid #D8D1BD;border-right:1px solid #CFC8B2;box-sizing:border-box"></div>
<div class="t" style="left:498.00px;top:87px;font-size:12px;font-weight:400;line-height:14px;transform:scaleX(0.8885);color:#000;">Warehouse</div>
<div style="left:563px;top:84px;width:65px;height:20px;background:#F5F2E8;border-top:1px solid #D8D1BD;border-right:1px solid #CFC8B2;box-sizing:border-box"></div>
<div class="t" style="left:587.00px;top:87px;font-size:12px;font-weight:400;line-height:14px;transform:scaleX(0.9152);color:#000;">Works</div>
<div style="left:628px;top:84px;width:47px;height:20px;background:#F5F2E8;border-top:1px solid #D8D1BD;border-right:1px solid #CFC8B2;box-sizing:border-box"></div>
<div class="t" style="left:651.13px;top:87px;font-size:12px;font-weight:400;line-height:14px;transform:scaleX(0.8714);color:#000;">FA</div>
<div style="left:675px;top:84px;width:44px;height:20px;background:#F5F2E8;border-top:1px solid #D8D1BD;border-right:1px solid #CFC8B2;box-sizing:border-box"></div>
<div class="t" style="left:698.08px;top:87px;font-size:12px;font-weight:400;line-height:14px;transform:scaleX(0.9200);color:#000;">IA</div>
<div style="left:784px;top:84px;width:50px;height:20px;background:#F5F2E8;border-top:1px solid #D8D1BD;border-right:1px solid #CFC8B2;box-sizing:border-box"></div>
<div class="t" style="left:807.11px;top:87px;font-size:12px;font-weight:400;line-height:14px;transform:scaleX(0.8875);color:#000;">HR</div>
<div style="left:834px;top:84px;width:69px;height:20px;background:#F5F2E8;border-top:1px solid #D8D1BD;border-right:1px solid #CFC8B2;box-sizing:border-box"></div>
<div class="t" style="left:857.12px;top:87px;font-size:12px;font-weight:400;line-height:14px;transform:scaleX(0.8769);color:#000;">Monitor</div>
<div style="left:15px;top:84px;width:1px;height:20px;background:#D8D2BF"></div>
<div style="left:718px;top:83px;width:66px;height:22px;border:1px solid #8A846C;border-bottom:none;box-sizing:border-box;background:#FFFBF6"></div>
<div class="t" style="left:741.11px;top:86px;font-size:12px;font-weight:400;line-height:14px;transform:scaleX(0.8914);color:#000;">Payroll</div>
<div style="left:718px;top:83px;width:1px;height:1px;background:#FFFBF6"></div>
<div style="left:783px;top:83px;width:1px;height:1px;background:#FFFBF6"></div>
<svg style="left:21px;top:88px" width="15" height="14" viewBox="0 0 15 14"><rect x="0.5" y="0" width="7.5" height="13" rx="1" fill="#7F86C4"/><rect x="1.5" y="1" width="5" height="12" fill="#A6ACDA"/><rect x="2" y="2" width="1" height="1" fill="#FFFFFF"/><rect x="4" y="2" width="1" height="1" fill="#FFFFFF"/><rect x="2" y="4" width="1" height="1" fill="#FFFFFF"/><rect x="4" y="4" width="1" height="1" fill="#FFFFFF"/><rect x="2" y="6" width="1" height="1" fill="#FFFFFF"/><rect x="4" y="6" width="1" height="1" fill="#FFFFFF"/><rect x="2" y="8" width="1" height="1" fill="#FFFFFF"/><rect x="4" y="8" width="1" height="1" fill="#FFFFFF"/><rect x="2" y="10" width="1" height="1" fill="#FFFFFF"/><rect x="4" y="10" width="1" height="1" fill="#FFFFFF"/><rect x="5" y="6" width="9.5" height="7.5" rx="1" fill="#1E6AAE"/><rect x="6.5" y="8" width="2" height="1.3" fill="#E8F0FF"/><rect x="9.3" y="8" width="2" height="1.3" fill="#E8F0FF"/><rect x="12" y="8" width="1.6" height="1.3" fill="#E8F0FF"/><rect x="6.5" y="10.5" width="2" height="1.3" fill="#E8F0FF"/><rect x="9.3" y="10.5" width="2" height="1.3" fill="#E8F0FF"/><rect x="12" y="10.5" width="1.6" height="1.3" fill="#E8F0FF"/></svg>
<svg style="left:103px;top:87px" width="13" height="15" viewBox="0 0 13 15"><rect x="0" y="0" width="12" height="13" rx="0.5" fill="#6C7CA0"/><rect x="1" y="1" width="10" height="10.5" fill="#C8D0E4"/><rect x="1" y="1" width="1.5" height="10.5" fill="#F4F6FF"/><path d="M0 13h3v1.5H0zM9 13h3v1.5H9z" fill="#5A6A90"/><path d="M4.5 4.2a1.6 1.6 0 1 1 2.2 1.4l-0.7 0.6v1" stroke="#303848" stroke-width="1.2" fill="none"/><rect x="5.4" y="8.3" width="1.2" height="1.2" fill="#303848"/></svg>
<svg style="left:160px;top:86px" width="17" height="16" viewBox="0 0 17 16"><rect x="0" y="0" width="16.5" height="15.5" fill="#1C4C8C"/><rect x="1.5" y="1.5" width="13.5" height="12.5" fill="none" stroke="#6C9CD0" stroke-width="0.8"/><path d="M3 5l3 1 6-3 3 0-2 3-6 4-3 3 1-4-3-2z" fill="#FFFFFF"/></svg>
<svg style="left:260px;top:87px" width="17" height="15" viewBox="0 0 17 15"><rect x="0.7" y="0.7" width="14.6" height="7" fill="#BCE0D0" stroke="#3E8A6A" stroke-width="1.3"/><rect x="2" y="2" width="1.6" height="4.5" fill="#F4FFFF"/><ellipse cx="12.1" cy="14.2" rx="4.4" ry="2.112" fill="#C07A08"/><ellipse cx="12.1" cy="13.399999999999999" rx="4.4" ry="2.112" fill="#F4C428"/><ellipse cx="12.1" cy="13.2" rx="3.3000000000000003" ry="1.32" fill="#F8DC60"/><ellipse cx="11.2" cy="11.9" rx="4.4" ry="2.112" fill="#C07A08"/><ellipse cx="11.2" cy="11.1" rx="4.4" ry="2.112" fill="#F4C428"/><ellipse cx="11.2" cy="10.9" rx="3.3000000000000003" ry="1.32" fill="#F8DC60"/><ellipse cx="12.1" cy="9.600000000000001" rx="4.4" ry="2.112" fill="#C07A08"/><ellipse cx="12.1" cy="8.8" rx="4.4" ry="2.112" fill="#F4C428"/><ellipse cx="12.1" cy="8.600000000000001" rx="3.3000000000000003" ry="1.32" fill="#F8DC60"/><ellipse cx="11.2" cy="7.3" rx="4.4" ry="2.112" fill="#C07A08"/><ellipse cx="11.2" cy="6.5" rx="4.4" ry="2.112" fill="#F4C428"/><ellipse cx="11.2" cy="6.3" rx="3.3000000000000003" ry="1.32" fill="#F8DC60"/><ellipse cx="11.2" cy="6.1" rx="2.64" ry="1.1" fill="#FFF4B0"/></svg>
<svg style="left:346px;top:89px" width="15" height="12" viewBox="0 0 15 12"><rect x="6.5" y="0" width="1.6" height="6" fill="#52709E"/><path d="M0 4.5h14.5l-1.5 7H1.5z" fill="#6C88B4"/><rect x="1.8" y="6" width="1.2" height="0.9" fill="#D8E4F4"/><rect x="4.0" y="6" width="1.2" height="0.9" fill="#D8E4F4"/><rect x="6.2" y="6" width="1.2" height="0.9" fill="#D8E4F4"/><rect x="8.4" y="6" width="1.2" height="0.9" fill="#D8E4F4"/><rect x="10.600000000000001" y="6" width="1.2" height="0.9" fill="#D8E4F4"/><rect x="12.8" y="6" width="1.2" height="0.9" fill="#D8E4F4"/><rect x="1.8" y="8" width="1.2" height="0.9" fill="#D8E4F4"/><rect x="4.0" y="8" width="1.2" height="0.9" fill="#D8E4F4"/><rect x="6.2" y="8" width="1.2" height="0.9" fill="#D8E4F4"/><rect x="8.4" y="8" width="1.2" height="0.9" fill="#D8E4F4"/><rect x="10.600000000000001" y="8" width="1.2" height="0.9" fill="#D8E4F4"/><rect x="12.8" y="8" width="1.2" height="0.9" fill="#D8E4F4"/><rect x="1.8" y="10" width="1.2" height="0.9" fill="#D8E4F4"/><rect x="4.0" y="10" width="1.2" height="0.9" fill="#D8E4F4"/><rect x="6.2" y="10" width="1.2" height="0.9" fill="#D8E4F4"/><rect x="8.4" y="10" width="1.2" height="0.9" fill="#D8E4F4"/><rect x="10.600000000000001" y="10" width="1.2" height="0.9" fill="#D8E4F4"/><rect x="12.8" y="10" width="1.2" height="0.9" fill="#D8E4F4"/></svg>
<svg style="left:425px;top:87px" width="15" height="15" viewBox="0 0 15 15"><path d="M2 0.5h6.5l-1 7h-4.5z" fill="#4CA85A"/><rect x="3" y="1" width="4.5" height="2" fill="#D8F0D8"/><rect x="3.3" y="1.3" width="0.9" height="0.9" fill="#E04040"/><path d="M0 7h4M10 7h4.5" stroke="#4CA85A" stroke-width="1.2"/><rect x="1" y="8.5" width="12" height="4.5" rx="0.8" fill="#3A9A48"/><rect x="1.5" y="13" width="1.5" height="1.5" fill="#203020"/><rect x="10.5" y="13" width="1.5" height="1.5" fill="#203020"/></svg>
<svg style="left:479px;top:86px" width="16" height="17" viewBox="0 0 16 17"><path d="M14.3 1.5c-1.2 1-1 2 -0.6 4s0.3 5-0.7 6" stroke="#101010" stroke-width="1.1" fill="none"/><rect x="1.5" y="5.5" width="9.5" height="7.5" fill="#D89820"/><path d="M4.5 5.5v7.5M7.8 5.5v7.5M1.5 8.2h9.5M1.5 10.8h9.5" stroke="#F8D860" stroke-width="0.9"/><path d="M0 13.5h13l1-2" stroke="#48A0E0" stroke-width="1.6" fill="none"/><circle cx="2.5" cy="15" r="1" fill="#101010"/><circle cx="13.5" cy="14.8" r="1.6" fill="#101010"/></svg>
<svg style="left:568px;top:89px" width="17" height="13" viewBox="0 0 17 13"><path d="M0 2.2h5.5V1h10.5v4.8H10.5l-1 2.2v1.8h3l1 2.5H3.2l1-2.5h3V8l-1.2-2.2H5.5V4.2z" fill="#9098B8"/><path d="M5.5 1h10.5v2H5.5z" fill="#D4DAEA"/><path d="M7 8h3v2H7z" fill="#5C6488"/></svg>
<svg style="left:633px;top:88px" width="17" height="14" viewBox="0 0 17 14"><rect x="0" y="5" width="9" height="5.5" fill="#98A2BC"/><path d="M9 1h6v9.5H9z" fill="#E8C02C"/><rect x="10" y="2.3" width="3.2" height="3.5" fill="#405878"/><rect x="15" y="8" width="1.4" height="1.8" fill="#E02020"/><circle cx="3" cy="11.5" r="2" fill="#101010"/><circle cx="11" cy="11.5" r="2" fill="#101010"/></svg>
<svg style="left:680px;top:88px" width="16" height="14" viewBox="0 0 16 14"><rect x="0.6" y="0.6" width="13.5" height="10.5" fill="#A8D0E8" stroke="#3A78A8" stroke-width="1.2"/><rect x="3" y="3" width="8.5" height="5.5" fill="#F0F4FF" stroke="#6090C0" stroke-width="0.6"/><path d="M4 4.6h5" stroke="#5050C0" stroke-width="0.9"/><circle cx="11.5" cy="10.5" r="3.3" fill="#C8C8E0" stroke="#8888A8" stroke-width="0.8"/><circle cx="11.5" cy="10.5" r="1.2" fill="none" stroke="#8080A0" stroke-width="0.7"/></svg>
<svg style="left:725px;top:87px" width="16" height="16" viewBox="0 0 16 16"><path d="M0.5 0.5h6.5l3 3v10.5H0.5z" fill="#FAFAFF" stroke="#7080A8"/><path d="M3 4h2M3 6.5h3M3 9h3M3 11.5h2.5" stroke="#7A70D0" stroke-width="1"/><ellipse cx="11.7" cy="14.9" rx="3.6" ry="1.728" fill="#C07A08"/><ellipse cx="11.7" cy="14.1" rx="3.6" ry="1.728" fill="#F4C428"/><ellipse cx="11.7" cy="13.9" rx="2.7" ry="1.08" fill="#F8DC60"/><ellipse cx="12.6" cy="12.600000000000001" rx="3.6" ry="1.728" fill="#C07A08"/><ellipse cx="12.6" cy="11.8" rx="3.6" ry="1.728" fill="#F4C428"/><ellipse cx="12.6" cy="11.600000000000001" rx="2.7" ry="1.08" fill="#F8DC60"/><ellipse cx="11.7" cy="10.3" rx="3.6" ry="1.728" fill="#C07A08"/><ellipse cx="11.7" cy="9.5" rx="3.6" ry="1.728" fill="#F4C428"/><ellipse cx="11.7" cy="9.3" rx="2.7" ry="1.08" fill="#F8DC60"/><ellipse cx="11.7" cy="9.1" rx="2.16" ry="0.9" fill="#FFF4B0"/></svg>
<svg style="left:790px;top:87px" width="15" height="15" viewBox="0 0 15 15"><circle cx="5" cy="3.8" r="2.8" fill="#E0A050"/><path d="M2.2 3.5a2.8 2.8 0 0 1 5.6 0c-1-1-4.6-1-5.6 0z" fill="#202020"/><path d="M0.5 12c0-3.5 2-5 4.5-5s4.5 1.5 4.5 5z" fill="#B8B8B8"/><circle cx="9" cy="5.5" r="3" fill="#F0A840"/><path d="M6 5.2a3 3 0 0 1 6 0c-1-1.1-5-1.1-6 0z" fill="#202020"/><path d="M3.8 15c0-3.8 2.5-5.5 5.2-5.5s5.5 1.7 5.5 5.5z" fill="#9C9C9C"/></svg>
<svg style="left:840px;top:87px" width="15" height="16" viewBox="0 0 15 16"><rect x="0.5" y="0.5" width="11.5" height="12" fill="#EEF2FA" stroke="#9AA8C8"/><path d="M4 0.5v12M7.8 0.5v12M0.5 4.5h11.5M0.5 8.5h11.5" stroke="#C8D4EA" stroke-width="0.8"/><path d="M1 12.5c1.5-5 5-8.5 10.5-10.5" stroke="#108030" stroke-width="1.2" fill="none"/><rect x="5" y="9.5" width="4" height="5" fill="#E0A020"/><rect x="10" y="5.5" width="4.5" height="9" fill="#2A7AE0"/></svg>
<svg style="left:25px;top:112px" width="28" height="31" viewBox="0 0 28 31"><path d="M0.5 0.5h12.5l8 7.5v19.5H0.5z" fill="#F8F9FE" stroke="#B8C0D8"/><path d="M13 0.5v7.5h8" fill="#EEF0F8" stroke="#C8CEE0"/><rect x="2" y="2" width="11" height="6" fill="#DCE0EE"/><path d="M3 4.5h4M8 4.5h4" stroke="#8C94C8" stroke-width="0.8"/><rect x="4.5" y="6.5" width="6" height="2.4" fill="#FFFFFF" stroke="#A8A8E4" stroke-width="0.7"/><rect x="11" y="6.5" width="5.5" height="2.4" fill="#FFFFFF" stroke="#A8A8E4" stroke-width="0.7"/><rect x="4.5" y="9.5" width="6" height="2.4" fill="#FFFFFF" stroke="#A8A8E4" stroke-width="0.7"/><rect x="11" y="9.5" width="5.5" height="2.4" fill="#FFFFFF" stroke="#A8A8E4" stroke-width="0.7"/><rect x="4.5" y="12.5" width="6" height="2.4" fill="#FFFFFF" stroke="#A8A8E4" stroke-width="0.7"/><rect x="11" y="12.5" width="5.5" height="2.4" fill="#FFFFFF" stroke="#A8A8E4" stroke-width="0.7"/><rect x="4.5" y="15.5" width="6" height="2.4" fill="#FFFFFF" stroke="#A8A8E4" stroke-width="0.7"/><rect x="11" y="15.5" width="5.5" height="2.4" fill="#FFFFFF" stroke="#A8A8E4" stroke-width="0.7"/><rect x="4.5" y="18.5" width="6" height="2.4" fill="#FFFFFF" stroke="#A8A8E4" stroke-width="0.7"/><rect x="11" y="18.5" width="5.5" height="2.4" fill="#FFFFFF" stroke="#A8A8E4" stroke-width="0.7"/><path d="M3 22.5h7M13 22.5h3" stroke="#8C94C8" stroke-width="0.8"/><path d="M21 8v20H1" fill="none" stroke="#D0D4E0"/><ellipse cx="20.2" cy="28.2" rx="5" ry="2.4" fill="#C07A08"/><ellipse cx="20.2" cy="27.4" rx="5" ry="2.4" fill="#F4C428"/><ellipse cx="20.2" cy="27.2" rx="3.75" ry="1.5" fill="#F8DC60"/><ellipse cx="21.1" cy="25.6" rx="5" ry="2.4" fill="#C07A08"/><ellipse cx="21.1" cy="24.8" rx="5" ry="2.4" fill="#F4C428"/><ellipse cx="21.1" cy="24.6" rx="3.75" ry="1.5" fill="#F8DC60"/><ellipse cx="20.2" cy="23.0" rx="5" ry="2.4" fill="#C07A08"/><ellipse cx="20.2" cy="22.2" rx="5" ry="2.4" fill="#F4C428"/><ellipse cx="20.2" cy="22.0" rx="3.75" ry="1.5" fill="#F8DC60"/><ellipse cx="21.1" cy="20.400000000000002" rx="5" ry="2.4" fill="#C07A08"/><ellipse cx="21.1" cy="19.6" rx="5" ry="2.4" fill="#F4C428"/><ellipse cx="21.1" cy="19.400000000000002" rx="3.75" ry="1.5" fill="#F8DC60"/><ellipse cx="20.2" cy="17.8" rx="5" ry="2.4" fill="#C07A08"/><ellipse cx="20.2" cy="17.0" rx="5" ry="2.4" fill="#F4C428"/><ellipse cx="20.2" cy="16.8" rx="3.75" ry="1.5" fill="#F8DC60"/><ellipse cx="20.2" cy="16.6" rx="3.0" ry="1.25" fill="#FFF4B0"/></svg>
<div class="t" style="left:57.93px;top:114px;font-size:21px;font-weight:400;line-height:23px;transform:scaleX(1.0361);color:#7A7560;">Payroll</div>
<div class="t" style="left:942.07px;top:118px;font-size:12px;font-weight:400;line-height:14px;transform:scaleX(0.9300);color:#000;">Советы</div>
<svg style="left:925px;top:116px" width="15" height="18" viewBox="0 0 15 18"><defs><linearGradient id="advg925" x1="0" y1="0" x2="1" y2="1"><stop offset="0.15" stop-color="#FFF200"/><stop offset="0.85" stop-color="#F05A10"/></linearGradient></defs><path d="M0.4 9.6L6 4.2l7.6 7.4-6.2 5.3z" fill="url(#advg925)" stroke="#9A3008" stroke-width="0.9"/><path d="M8 15.6l4.8-4" stroke="#FFFFFF" stroke-width="1.2" stroke-dasharray="0.9 0.8"/><path d="M7.4 3.4a2.7 2.7 0 1 1 4.5 2l-1.3 1.1v1.7" stroke="#1428E8" stroke-width="2" fill="none"/><rect x="9.6" y="9.2" width="2.1" height="2.1" fill="#1428E8"/></svg>
<svg style="left:993px;top:117px" width="17" height="17" viewBox="0 0 17 17"><path d="M9.5 10l5.5 5.5" stroke="#585858" stroke-width="3.6"/><path d="M9.5 10l5.5 5.5" stroke="#F4F4F4" stroke-width="2.1"/><path d="M5 5.5l5 5" stroke="#9A9A9A" stroke-width="2.2"/><circle cx="3.6" cy="3.9" r="3.1" fill="#C4C4C4" stroke="#4A4A4A" stroke-width="1"/><rect x="2.9" y="0.2" width="1.5" height="3.8" fill="#2A2A2A"/><path d="M1.2 15.8L10.8 6.2" stroke="#701808" stroke-width="3"/><path d="M1 15.2L10.4 5.8" stroke="#E8A820" stroke-width="1.7"/><path d="M7.6 3.6l3.8-3.2 5.2 5.2-3.4 3.6z" fill="#8C8C8C" stroke="#3A3A3A" stroke-width="0.8"/><path d="M10.5 2.5l3.5 3.5" stroke="#D8D8D8" stroke-width="1"/><path d="M12.3 0.9l2.6 2.6" stroke="#E09A30" stroke-width="1.3"/></svg>
<div class="t" style="left:1010.07px;top:118px;font-size:12px;font-weight:400;line-height:14px;transform:scaleX(0.9282);color:#000;">Setup...</div>
<div style="left:987px;top:116px;width:1px;height:19px;background:#D8D0BC"></div>
<div style="left:21px;top:146px;width:1033px;height:1px;background:#857E66"></div>
<div style="left:21px;top:147px;width:1033px;height:16px;background:#ECE6DE"></div>
<div class="t" style="left:25.01px;top:148px;font-size:12px;font-weight:700;line-height:14px;transform:scaleX(0.9930);color:#7D7862;">Pattern of Operation</div>
<svg style="left:50px;top:185px" width="23" height="29" viewBox="0 0 23 29"><defs><linearGradient id="g2" x1="0" y1="0" x2="0" y2="1"><stop offset="0" stop-color="#C8D0E4"/><stop offset="1" stop-color="#F4F6FC"/></linearGradient></defs><path d="M1.5 1.5h13l7 7v20h-20z" fill="#E4E6EE" opacity="0.6"/><path d="M0.5 0.5h13l7 7v19.5H0.5z" fill="#FFFFFF" stroke="#A4ACC4"/><path d="M13.5 0.5v7h7" fill="#F0F2F8" stroke="#B0B8CC"/><rect x="2" y="2" width="11" height="7" fill="url(#g2)"/><path d="M7 4.5h5M7 6.5h2M10 6.5h2" stroke="#5C64C0" stroke-width="1"/><path d="M3 9.5h16" stroke="#9CA0D8" stroke-width="1" stroke-dasharray="2 0.6"/><rect x="4.5" y="12.5" width="12" height="6" rx="1" fill="#FFFFFF" stroke="#9494D8" stroke-width="1"/><path d="M10.5 12.5v6M4.5 15.5h12" stroke="#9494D8" stroke-width="1"/><path d="M3 21.5h1.5M6 21.5h5M12 21.5h6M3 23.5h6M10 23.5h1M12 23.5h6" stroke="#A8A8E0" stroke-width="1"/><rect x="15" y="25" width="1.2" height="1.2" fill="#7070B0"/><rect x="17" y="25" width="1.2" height="1.2" fill="#7070B0"/></svg>
<div class="t" style="left:24.00px;top:216px;font-size:12px;font-weight:400;line-height:14px;transform:scaleX(0.8940);color:#2255FF;text-decoration:underline">Accrued Payroll</div>
<div style="left:85px;top:199px;width:38px;height:6px;background:#EDE6DC"></div>
<svg style="left:136px;top:185px" width="23" height="29" viewBox="0 0 23 29"><defs><linearGradient id="g3" x1="0" y1="0" x2="0" y2="1"><stop offset="0" stop-color="#C8D0E4"/><stop offset="1" stop-color="#F4F6FC"/></linearGradient></defs><path d="M1.5 1.5h13l7 7v20h-20z" fill="#E4E6EE" opacity="0.6"/><path d="M0.5 0.5h13l7 7v19.5H0.5z" fill="#FFFFFF" stroke="#A4ACC4"/><path d="M13.5 0.5v7h7" fill="#F0F2F8" stroke="#B0B8CC"/><rect x="2" y="2" width="11" height="7" fill="url(#g3)"/><path d="M7 4.5h5M7 6.5h2M10 6.5h2" stroke="#5C64C0" stroke-width="1"/><path d="M3 9.5h16" stroke="#9CA0D8" stroke-width="1" stroke-dasharray="2 0.6"/><rect x="4.5" y="12.5" width="12" height="6" rx="1" fill="#FFFFFF" stroke="#9494D8" stroke-width="1"/><path d="M10.5 12.5v6M4.5 15.5h12" stroke="#9494D8" stroke-width="1"/><path d="M3 21.5h1.5M6 21.5h5M12 21.5h6M3 23.5h6M10 23.5h1M12 23.5h6" stroke="#A8A8E0" stroke-width="1"/><rect x="15" y="25" width="1.2" height="1.2" fill="#7070B0"/><rect x="17" y="25" width="1.2" height="1.2" fill="#7070B0"/></svg>
<div class="t" style="left:110.11px;top:216px;font-size:12px;font-weight:400;line-height:14px;transform:scaleX(0.8900);color:#2255FF;text-decoration:underline">Input of Activity</div>
<div class="t" style="left:122.14px;top:229px;font-size:12px;font-weight:400;line-height:14px;transform:scaleX(0.8607);color:#2255FF;text-decoration:underline">Interest for</div>
<div class="t" style="left:134.15px;top:242px;font-size:12px;font-weight:400;line-height:14px;transform:scaleX(0.8538);color:#2255FF;text-decoration:underline">UTIE</div>
<div style="left:171px;top:199px;width:38px;height:6px;background:#EDE6DC"></div>
<svg style="left:222px;top:185px" width="23" height="29" viewBox="0 0 23 29"><defs><linearGradient id="g4" x1="0" y1="0" x2="0" y2="1"><stop offset="0" stop-color="#C8D0E4"/><stop offset="1" stop-color="#F4F6FC"/></linearGradient></defs><path d="M1.5 1.5h13l7 7v20h-20z" fill="#E4E6EE" opacity="0.6"/><path d="M0.5 0.5h13l7 7v19.5H0.5z" fill="#FFFFFF" stroke="#A4ACC4"/><path d="M13.5 0.5v7h7" fill="#F0F2F8" stroke="#B0B8CC"/><rect x="2" y="2" width="11" height="7" fill="url(#g4)"/><path d="M7 4.5h5M7 6.5h2M10 6.5h2" stroke="#5C64C0" stroke-width="1"/><path d="M3 9.5h16" stroke="#9CA0D8" stroke-width="1" stroke-dasharray="2 0.6"/><rect x="4.5" y="12.5" width="12" height="6" rx="1" fill="#FFFFFF" stroke="#9494D8" stroke-width="1"/><path d="M10.5 12.5v6M4.5 15.5h12" stroke="#9494D8" stroke-width="1"/><path d="M3 21.5h1.5M6 21.5h5M12 21.5h6M3 23.5h6M10 23.5h1M12 23.5h6" stroke="#A8A8E0" stroke-width="1"/><rect x="15" y="25" width="1.2" height="1.2" fill="#7070B0"/><rect x="17" y="25" width="1.2" height="1.2" fill="#7070B0"/></svg>
<div class="t" style="left:222.12px;top:216px;font-size:12px;font-weight:400;line-height:14px;transform:scaleX(0.8783);color:#2255FF;text-decoration:underline">UST</div>
<div class="t" style="left:207.12px;top:229px;font-size:12px;font-weight:400;line-height:14px;transform:scaleX(0.8828);color:#2255FF;text-decoration:underline">Calculation</div>
<div style="left:257px;top:199px;width:38px;height:6px;background:#EDE6DC"></div>
<svg style="left:308px;top:185px" width="23" height="29" viewBox="0 0 23 29"><defs><linearGradient id="g5" x1="0" y1="0" x2="0" y2="1"><stop offset="0" stop-color="#C8D0E4"/><stop offset="1" stop-color="#F4F6FC"/></linearGradient></defs><path d="M1.5 1.5h13l7 7v20h-20z" fill="#E4E6EE" opacity="0.6"/><path d="M0.5 0.5h13l7 7v19.5H0.5z" fill="#FFFFFF" stroke="#A4ACC4"/><path d="M13.5 0.5v7h7" fill="#F0F2F8" stroke="#B0B8CC"/><rect x="2" y="2" width="11" height="7" fill="url(#g5)"/><path d="M7 4.5h5M7 6.5h2M10 6.5h2" stroke="#5C64C0" stroke-width="1"/><path d="M3 9.5h16" stroke="#9CA0D8" stroke-width="1" stroke-dasharray="2 0.6"/><rect x="4.5" y="12.5" width="12" height="6" rx="1" fill="#FFFFFF" stroke="#9494D8" stroke-width="1"/><path d="M10.5 12.5v6M4.5 15.5h12" stroke="#9494D8" stroke-width="1"/><path d="M3 21.5h1.5M6 21.5h5M12 21.5h6M3 23.5h6M10 23.5h1M12 23.5h6" stroke="#A8A8E0" stroke-width="1"/><rect x="15" y="25" width="1.2" height="1.2" fill="#7070B0"/><rect x="17" y="25" width="1.2" height="1.2" fill="#7070B0"/></svg>
<div class="t" style="left:303.14px;top:216px;font-size:12px;font-weight:400;line-height:14px;transform:scaleX(0.8629);color:#2255FF;text-decoration:underline">Payroll</div>
<div class="t" style="left:288.00px;top:229px;font-size:12px;font-weight:400;line-height:14px;transform:scaleX(0.9000);color:#2255FF;text-decoration:underline">Transactions</div>
<div style="left:343px;top:199px;width:38px;height:6px;background:#EDE6DC"></div>
<svg style="left:394px;top:185px" width="23" height="29" viewBox="0 0 23 29"><defs><linearGradient id="g6" x1="0" y1="0" x2="0" y2="1"><stop offset="0" stop-color="#C8D0E4"/><stop offset="1" stop-color="#F4F6FC"/></linearGradient></defs><path d="M1.5 1.5h13l7 7v20h-20z" fill="#E4E6EE" opacity="0.6"/><path d="M0.5 0.5h13l7 7v19.5H0.5z" fill="#FFFFFF" stroke="#A4ACC4"/><path d="M13.5 0.5v7h7" fill="#F0F2F8" stroke="#B0B8CC"/><rect x="2" y="2" width="11" height="7" fill="url(#g6)"/><path d="M7 4.5h5M7 6.5h2M10 6.5h2" stroke="#5C64C0" stroke-width="1"/><path d="M3 9.5h16" stroke="#9CA0D8" stroke-width="1" stroke-dasharray="2 0.6"/><rect x="4.5" y="12.5" width="12" height="6" rx="1" fill="#FFFFFF" stroke="#9494D8" stroke-width="1"/><path d="M10.5 12.5v6M4.5 15.5h12" stroke="#9494D8" stroke-width="1"/><path d="M3 21.5h1.5M6 21.5h5M12 21.5h6M3 23.5h6M10 23.5h1M12 23.5h6" stroke="#A8A8E0" stroke-width="1"/><rect x="15" y="25" width="1.2" height="1.2" fill="#7070B0"/><rect x="17" y="25" width="1.2" height="1.2" fill="#7070B0"/></svg>
<div class="t" style="left:367.15px;top:216px;font-size:12px;font-weight:400;line-height:14px;transform:scaleX(0.8512);color:#2255FF;text-decoration:underline">Payroll Payment</div>
<div style="left:429px;top:199px;width:38px;height:6px;background:#EDE6DC"></div>
<svg style="left:480px;top:185px" width="23" height="29" viewBox="0 0 23 29"><defs><linearGradient id="g7" x1="0" y1="0" x2="0" y2="1"><stop offset="0" stop-color="#C8D0E4"/><stop offset="1" stop-color="#F4F6FC"/></linearGradient></defs><path d="M1.5 1.5h13l7 7v20h-20z" fill="#E4E6EE" opacity="0.6"/><path d="M0.5 0.5h13l7 7v19.5H0.5z" fill="#FFFFFF" stroke="#A4ACC4"/><path d="M13.5 0.5v7h7" fill="#F0F2F8" stroke="#B0B8CC"/><rect x="2" y="2" width="11" height="7" fill="url(#g7)"/><path d="M7 4.5h5M7 6.5h2M10 6.5h2" stroke="#5C64C0" stroke-width="1"/><path d="M3 9.5h16" stroke="#9CA0D8" stroke-width="1" stroke-dasharray="2 0.6"/><rect x="4.5" y="12.5" width="12" height="6" rx="1" fill="#FFFFFF" stroke="#9494D8" stroke-width="1"/><path d="M10.5 12.5v6M4.5 15.5h12" stroke="#9494D8" stroke-width="1"/><path d="M3 21.5h1.5M6 21.5h5M12 21.5h6M3 23.5h6M10 23.5h1M12 23.5h6" stroke="#A8A8E0" stroke-width="1"/><rect x="15" y="25" width="1.2" height="1.2" fill="#7070B0"/><rect x="17" y="25" width="1.2" height="1.2" fill="#7070B0"/></svg>
<div class="t" style="left:456.15px;top:216px;font-size:12px;font-weight:400;line-height:14px;transform:scaleX(0.8525);color:#2255FF;text-decoration:underline">Payment Order</div>
<div style="left:515px;top:199px;width:38px;height:6px;background:#EDE6DC"></div>
<svg style="left:566px;top:185px" width="23" height="29" viewBox="0 0 23 29"><defs><linearGradient id="g8" x1="0" y1="0" x2="0" y2="1"><stop offset="0" stop-color="#C8D0E4"/><stop offset="1" stop-color="#F4F6FC"/></linearGradient></defs><path d="M1.5 1.5h13l7 7v20h-20z" fill="#E4E6EE" opacity="0.6"/><path d="M0.5 0.5h13l7 7v19.5H0.5z" fill="#FFFFFF" stroke="#A4ACC4"/><path d="M13.5 0.5v7h7" fill="#F0F2F8" stroke="#B0B8CC"/><rect x="2" y="2" width="11" height="7" fill="url(#g8)"/><path d="M7 4.5h5M7 6.5h2M10 6.5h2" stroke="#5C64C0" stroke-width="1"/><path d="M3 9.5h16" stroke="#9CA0D8" stroke-width="1" stroke-dasharray="2 0.6"/><rect x="4.5" y="12.5" width="12" height="6" rx="1" fill="#FFFFFF" stroke="#9494D8" stroke-width="1"/><path d="M10.5 12.5v6M4.5 15.5h12" stroke="#9494D8" stroke-width="1"/><path d="M3 21.5h1.5M6 21.5h5M12 21.5h6M3 23.5h6M10 23.5h1M12 23.5h6" stroke="#A8A8E0" stroke-width="1"/><rect x="15" y="25" width="1.2" height="1.2" fill="#7070B0"/><rect x="17" y="25" width="1.2" height="1.2" fill="#7070B0"/></svg>
<div class="t" style="left:539.14px;top:216px;font-size:12px;font-weight:400;line-height:14px;transform:scaleX(0.8628);color:#2255FF;text-decoration:underline">Payroll Payment</div>
<div class="t" style="left:541.00px;top:229px;font-size:12px;font-weight:400;line-height:14px;transform:scaleX(0.8612);color:#2255FF;text-decoration:underline">from Petty Cash</div>
<div style="left:601px;top:199px;width:38px;height:6px;background:#EDE6DC"></div>
<svg style="left:650px;top:185px" width="23" height="29" viewBox="0 0 23 29"><defs><linearGradient id="g9" x1="0" y1="0" x2="0" y2="1"><stop offset="0" stop-color="#C8D0E4"/><stop offset="1" stop-color="#F4F6FC"/></linearGradient></defs><path d="M1.5 1.5h13l7 7v20h-20z" fill="#E4E6EE" opacity="0.6"/><path d="M0.5 0.5h13l7 7v19.5H0.5z" fill="#FFFFFF" stroke="#A4ACC4"/><path d="M13.5 0.5v7h7" fill="#F0F2F8" stroke="#B0B8CC"/><rect x="2" y="2" width="11" height="7" fill="url(#g9)"/><path d="M7 4.5h5M7 6.5h2M10 6.5h2" stroke="#5C64C0" stroke-width="1"/><path d="M3 9.5h16" stroke="#9CA0D8" stroke-width="1" stroke-dasharray="2 0.6"/><rect x="4.5" y="12.5" width="12" height="6" rx="1" fill="#FFFFFF" stroke="#9494D8" stroke-width="1"/><path d="M10.5 12.5v6M4.5 15.5h12" stroke="#9494D8" stroke-width="1"/><path d="M3 21.5h1.5M6 21.5h5M12 21.5h6M3 23.5h6M10 23.5h1M12 23.5h6" stroke="#A8A8E0" stroke-width="1"/><rect x="15" y="25" width="1.2" height="1.2" fill="#7070B0"/><rect x="17" y="25" width="1.2" height="1.2" fill="#7070B0"/></svg>
<div class="t" style="left:627.14px;top:216px;font-size:12px;font-weight:400;line-height:14px;transform:scaleX(0.8597);color:#2255FF;text-decoration:underline">Unpaid Payroll</div>
<div style="left:46px;top:184px;width:30px;height:30px;border:1px dotted #000;box-sizing:border-box"></div>
<div style="left:23px;top:216px;width:77px;height:14px;border:1px dotted #000;box-sizing:border-box"></div>
<div class="t" style="left:23.14px;top:313px;font-size:12px;font-weight:400;line-height:14px;transform:scaleX(0.8644);color:#2255FF;text-decoration:underline">Payroll Assistant</div>
<svg style="left:44px;top:279px" width="32" height="33" viewBox="0 0 32 33"><path d="M10 0.5L4 16h12z" fill="#7A58B8"/><path d="M10 0.5L7 12" stroke="#9A80D0" stroke-width="1" /><circle cx="9" cy="8" r="0.6" fill="#E8E0FF"/><circle cx="11" cy="12" r="0.6" fill="#E8E0FF"/><circle cx="7" cy="13" r="0.6" fill="#E8E0FF"/><path d="M4.5 16c0 3 1.5 5.5 5.5 5.5s5.5-2.5 5.5-5.5z" fill="#F0A860"/><path d="M4 15.5c-1 3 0 5 1.5 6l1-5z" fill="#101010"/><path d="M0.5 32c0-5 3-9 9.5-9s9.5 4 9.5 9z" fill="#7A58B8"/><path d="M7 22.5l3 3 3-3z" fill="#FFFFFF"/><circle cx="4" cy="27" r="0.6" fill="#E8E0FF"/><circle cx="15" cy="28" r="0.6" fill="#E8E0FF"/><circle cx="9" cy="29" r="0.6" fill="#E8E0FF"/><ellipse cx="24.7" cy="31.2" rx="4.8" ry="2.304" fill="#C07A08"/><ellipse cx="24.7" cy="30.4" rx="4.8" ry="2.304" fill="#F4C428"/><ellipse cx="24.7" cy="30.2" rx="3.5999999999999996" ry="1.44" fill="#F8DC60"/><ellipse cx="25.6" cy="28.6" rx="4.8" ry="2.304" fill="#C07A08"/><ellipse cx="25.6" cy="27.8" rx="4.8" ry="2.304" fill="#F4C428"/><ellipse cx="25.6" cy="27.6" rx="3.5999999999999996" ry="1.44" fill="#F8DC60"/><ellipse cx="24.7" cy="26.0" rx="4.8" ry="2.304" fill="#C07A08"/><ellipse cx="24.7" cy="25.2" rx="4.8" ry="2.304" fill="#F4C428"/><ellipse cx="24.7" cy="25.0" rx="3.5999999999999996" ry="1.44" fill="#F8DC60"/><ellipse cx="25.6" cy="23.400000000000002" rx="4.8" ry="2.304" fill="#C07A08"/><ellipse cx="25.6" cy="22.6" rx="4.8" ry="2.304" fill="#F4C428"/><ellipse cx="25.6" cy="22.400000000000002" rx="3.5999999999999996" ry="1.44" fill="#F8DC60"/><ellipse cx="24.7" cy="20.8" rx="4.8" ry="2.304" fill="#C07A08"/><ellipse cx="24.7" cy="20.0" rx="4.8" ry="2.304" fill="#F4C428"/><ellipse cx="24.7" cy="19.8" rx="3.5999999999999996" ry="1.44" fill="#F8DC60"/><ellipse cx="24.7" cy="19.6" rx="2.88" ry="1.2" fill="#FFF4B0"/></svg>
<div style="left:21px;top:409px;width:332px;height:280px;background:#FEF1E5"></div>
<div style="left:21px;top:409px;width:332px;height:1px;background:#857E66"></div>
<div style="left:21px;top:410px;width:332px;height:17px;background:#ECE6DE"></div>
<div class="t" style="left:25.00px;top:412px;font-size:12px;font-weight:700;line-height:14px;transform:scaleX(0.9440);color:#7D7862;">Journals</div>
<div style="left:369px;top:409px;width:334px;height:280px;background:#FEF1E5"></div>
<div style="left:369px;top:409px;width:334px;height:1px;background:#857E66"></div>
<div style="left:369px;top:410px;width:334px;height:17px;background:#ECE6DE"></div>
<div class="t" style="left:373.01px;top:412px;font-size:12px;font-weight:700;line-height:14px;transform:scaleX(0.9869);color:#7D7862;">Directories</div>
<div style="left:719px;top:409px;width:335px;height:280px;background:#FEF1E5"></div>
<div style="left:719px;top:409px;width:335px;height:1px;background:#857E66"></div>
<div style="left:719px;top:410px;width:335px;height:17px;background:#ECE6DE"></div>
<div class="t" style="left:723.02px;top:412px;font-size:12px;font-weight:700;line-height:14px;transform:scaleX(0.9818);color:#7D7862;">Reports</div>
<div class="t" style="left:44.12px;top:434px;font-size:12px;font-weight:400;line-height:14px;transform:scaleX(0.8808);color:#2255FF;text-decoration:underline">Payroll Documents</div>
<svg style="left:29px;top:434px" width="13" height="16" viewBox="0 0 13 16"><defs><linearGradient id="g10" x1="0" y1="0" x2="1" y2="1"><stop offset="0" stop-color="#6CD880"/><stop offset="1" stop-color="#1E8A40"/></linearGradient></defs><rect x="0" y="0" width="11" height="13" fill="#1A7436"/><rect x="2" y="0.8" width="8" height="1.2" fill="#D8F0DC"/><rect x="2" y="2" width="10.5" height="13.5" fill="url(#g10)"/><rect x="12" y="2" width="0.8" height="13.5" fill="#1A6A34"/><rect x="2" y="14.8" width="10.8" height="0.8" fill="#1A6A34"/><rect x="0" y="2" width="2" height="3" fill="#C88A68"/><rect x="0" y="5" width="2" height="6" fill="#D0ECDC"/><rect x="0" y="11" width="2" height="4" fill="#0E3A1C"/><rect x="4" y="5.5" width="3" height="1.2" fill="#1A5A2C"/><rect x="7" y="6.5" width="2" height="1" fill="#E8FFE8"/><rect x="4" y="9.5" width="3" height="1.2" fill="#1A5A2C"/><rect x="7" y="10.5" width="2" height="1" fill="#E8FFE8"/></svg>
<div class="t" style="left:45.11px;top:459px;font-size:12px;font-weight:400;line-height:14px;transform:scaleX(0.8933);color:#2255FF;text-decoration:underline">PIT &amp; UST Documents</div>
<svg style="left:30px;top:458px" width="13" height="16" viewBox="0 0 13 16"><defs><linearGradient id="g11" x1="0" y1="0" x2="1" y2="1"><stop offset="0" stop-color="#6CD880"/><stop offset="1" stop-color="#1E8A40"/></linearGradient></defs><rect x="0" y="0" width="11" height="13" fill="#1A7436"/><rect x="2" y="0.8" width="8" height="1.2" fill="#D8F0DC"/><rect x="2" y="2" width="10.5" height="13.5" fill="url(#g11)"/><rect x="12" y="2" width="0.8" height="13.5" fill="#1A6A34"/><rect x="2" y="14.8" width="10.8" height="0.8" fill="#1A6A34"/><rect x="0" y="2" width="2" height="3" fill="#C88A68"/><rect x="0" y="5" width="2" height="6" fill="#D0ECDC"/><rect x="0" y="11" width="2" height="4" fill="#0E3A1C"/><rect x="4" y="5.5" width="3" height="1.2" fill="#1A5A2C"/><rect x="7" y="6.5" width="2" height="1" fill="#E8FFE8"/><rect x="4" y="9.5" width="3" height="1.2" fill="#1A5A2C"/><rect x="7" y="10.5" width="2" height="1" fill="#E8FFE8"/></svg>
<div class="t" style="left:44.11px;top:483px;font-size:12px;font-weight:400;line-height:14px;transform:scaleX(0.8901);color:#2255FF;text-decoration:underline">Input of Types of Scheduled Employee Incomes</div>
<svg style="left:29px;top:483px" width="12" height="15" viewBox="0 0 12 15" shape-rendering="crispEdges"><path d="M0.5 0.5h7l3.5 3.5v9.5H0.5z" fill="#FFFFFF" stroke="#8090A8"/><path d="M7.5 0.5v3.5h3.5" fill="#E8ECF4" stroke="#8090A8"/><rect x="3" y="2" width="2" height="1" fill="#8878C8"/><rect x="2" y="4" width="3" height="1" fill="#8878C8"/><rect x="2.5" y="6.5" width="6" height="3" fill="none" stroke="#8878C8"/><path d="M5.5 6.5v3" stroke="#8878C8"/><rect x="2" y="11" width="3" height="1" fill="#9888D0"/><rect x="6" y="11" width="3" height="1" fill="#9888D0"/></svg>
<div class="t" style="left:44.09px;top:507px;font-size:12px;font-weight:400;line-height:14px;transform:scaleX(0.9148);color:#2255FF;text-decoration:underline">Report &quot;2-НДФЛ&quot; Private Individual Income Information</div>
<svg style="left:29px;top:507px" width="12" height="15" viewBox="0 0 12 15" shape-rendering="crispEdges"><path d="M0.5 0.5h7l3.5 3.5v9.5H0.5z" fill="#FFFFFF" stroke="#8090A8"/><path d="M7.5 0.5v3.5h3.5" fill="#E8ECF4" stroke="#8090A8"/><rect x="3" y="2" width="2" height="1" fill="#8878C8"/><rect x="2" y="4" width="3" height="1" fill="#8878C8"/><rect x="2.5" y="6.5" width="6" height="3" fill="none" stroke="#8878C8"/><path d="M5.5 6.5v3" stroke="#8878C8"/><rect x="2" y="11" width="3" height="1" fill="#9888D0"/><rect x="6" y="11" width="3" height="1" fill="#9888D0"/></svg>
<div class="t" style="left:44.10px;top:531px;font-size:12px;font-weight:400;line-height:14px;transform:scaleX(0.8989);color:#2255FF;text-decoration:underline">PIT Property Deduction Evidence</div>
<svg style="left:29px;top:531px" width="12" height="15" viewBox="0 0 12 15" shape-rendering="crispEdges"><path d="M0.5 0.5h7l3.5 3.5v9.5H0.5z" fill="#FFFFFF" stroke="#8090A8"/><path d="M7.5 0.5v3.5h3.5" fill="#E8ECF4" stroke="#8090A8"/><rect x="3" y="2" width="2" height="1" fill="#8878C8"/><rect x="2" y="4" width="3" height="1" fill="#8878C8"/><rect x="2.5" y="6.5" width="6" height="3" fill="none" stroke="#8878C8"/><path d="M5.5 6.5v3" stroke="#8878C8"/><rect x="2" y="11" width="3" height="1" fill="#9888D0"/><rect x="6" y="11" width="3" height="1" fill="#9888D0"/></svg>
<div class="t" style="left:44.12px;top:555px;font-size:12px;font-weight:400;line-height:14px;transform:scaleX(0.8812);color:#2255FF;text-decoration:underline">Reclassification of Unpaid Payroll into Gains</div>
<svg style="left:29px;top:555px" width="12" height="15" viewBox="0 0 12 15" shape-rendering="crispEdges"><path d="M0.5 0.5h7l3.5 3.5v9.5H0.5z" fill="#FFFFFF" stroke="#8090A8"/><path d="M7.5 0.5v3.5h3.5" fill="#E8ECF4" stroke="#8090A8"/><rect x="3" y="2" width="2" height="1" fill="#8878C8"/><rect x="2" y="4" width="3" height="1" fill="#8878C8"/><rect x="2.5" y="6.5" width="6" height="3" fill="none" stroke="#8878C8"/><path d="M5.5 6.5v3" stroke="#8878C8"/><rect x="2" y="11" width="3" height="1" fill="#9888D0"/><rect x="6" y="11" width="3" height="1" fill="#9888D0"/></svg>
<div class="t" style="left:393.11px;top:435px;font-size:12px;font-weight:400;line-height:14px;transform:scaleX(0.8909);color:#2255FF;text-decoration:underline">Private Individuals (PIT Data)</div>
<svg style="left:377px;top:435px" width="15" height="15" viewBox="0 0 15 15"><path d="M0 12.5c0-3.5 1.8-5 4.5-5s4 1 4.5 3l-2 2.5z" fill="#4C9CD0"/><ellipse cx="5" cy="3.8" rx="2.6" ry="3.2" fill="#E8A040"/><path d="M2.4 3.5c0-2.5 1-3.3 2.6-3.3s2.6 0.8 2.6 3.3c-0.6-1.4-1.4-2-2.6-2s-2 0.6-2.6 2z" fill="#3A2810"/><path d="M4 15c0-3.5 2-5 5.5-5s5.5 1.5 5.5 5z" fill="#2C80B8"/><path d="M7.5 10.3l2 1.2 2-1.2z" fill="#E8F4FF"/><ellipse cx="9.5" cy="6.2" rx="3" ry="3.3" fill="#F0A848"/><path d="M6.5 6c0-2.6 1.2-3.5 3-3.5s3 0.9 3 3.5c-0.6-1.5-1.6-2.1-3-2.1s-2.4 0.6-3 2.1z" fill="#3A2810"/></svg>
<div class="t" style="left:394.00px;top:459px;font-size:12px;font-weight:400;line-height:14px;transform:scaleX(0.8631);color:#2255FF;text-decoration:underline">Organization Employees</div>
<svg style="left:378px;top:458px" width="13" height="15" viewBox="0 0 13 15"><defs><linearGradient id="g12" x1="0" y1="0" x2="0" y2="1"><stop offset="0" stop-color="#FFE040"/><stop offset="1" stop-color="#D89820"/></linearGradient></defs><rect x="0" y="3.5" width="1.6" height="11" fill="#F0B830"/><rect x="11.4" y="3.5" width="1.6" height="11" fill="#F0B830"/><path d="M1.5 0.5h4.5l0.8 1h5.2v9h-10.5z" fill="#7888A8"/><rect x="2.3" y="1.5" width="3" height="1.2" fill="#E8ECF4"/><rect x="2.3" y="3.5" width="3" height="1.2" fill="#E8ECF4"/><rect x="6" y="2.7" width="5" height="1" fill="#E8ECF4"/><rect x="6" y="4.6" width="5" height="1" fill="#E8ECF4"/><rect x="2.3" y="5.8" width="8.5" height="5" fill="#FAFAFF"/><path d="M3 7.5h6M4 9.5h5" stroke="#9890D8" stroke-width="0.9"/><path d="M0 9.5h13v5H0z" fill="url(#g12)"/></svg>
<div class="t" style="left:393.13px;top:483px;font-size:12px;font-weight:400;line-height:14px;transform:scaleX(0.8741);color:#2255FF;text-decoration:underline">Employee Information Management</div>
<svg style="left:378px;top:482px" width="13" height="15" viewBox="0 0 13 15"><defs><linearGradient id="g13" x1="0" y1="0" x2="0" y2="1"><stop offset="0" stop-color="#FFE040"/><stop offset="1" stop-color="#D89820"/></linearGradient></defs><rect x="0" y="3.5" width="1.6" height="11" fill="#F0B830"/><rect x="11.4" y="3.5" width="1.6" height="11" fill="#F0B830"/><path d="M1.5 0.5h4.5l0.8 1h5.2v9h-10.5z" fill="#7888A8"/><rect x="2.3" y="1.5" width="3" height="1.2" fill="#E8ECF4"/><rect x="2.3" y="3.5" width="3" height="1.2" fill="#E8ECF4"/><rect x="6" y="2.7" width="5" height="1" fill="#E8ECF4"/><rect x="6" y="4.6" width="5" height="1" fill="#E8ECF4"/><rect x="2.3" y="5.8" width="8.5" height="5" fill="#FAFAFF"/><path d="M3 7.5h6M4 9.5h5" stroke="#9890D8" stroke-width="0.9"/><path d="M0 9.5h13v5H0z" fill="url(#g13)"/></svg>
<div class="t" style="left:393.11px;top:507px;font-size:12px;font-weight:400;line-height:14px;transform:scaleX(0.8937);color:#2255FF;text-decoration:underline">Payroll Transaction Templates</div>
<svg style="left:378px;top:506px" width="13" height="15" viewBox="0 0 13 15"><defs><linearGradient id="g14" x1="0" y1="0" x2="0" y2="1"><stop offset="0" stop-color="#FFE040"/><stop offset="1" stop-color="#D89820"/></linearGradient></defs><rect x="0" y="3.5" width="1.6" height="11" fill="#F0B830"/><rect x="11.4" y="3.5" width="1.6" height="11" fill="#F0B830"/><path d="M1.5 0.5h4.5l0.8 1h5.2v9h-10.5z" fill="#7888A8"/><rect x="2.3" y="1.5" width="3" height="1.2" fill="#E8ECF4"/><rect x="2.3" y="3.5" width="3" height="1.2" fill="#E8ECF4"/><rect x="6" y="2.7" width="5" height="1" fill="#E8ECF4"/><rect x="6" y="4.6" width="5" height="1" fill="#E8ECF4"/><rect x="2.3" y="5.8" width="8.5" height="5" fill="#FAFAFF"/><path d="M3 7.5h6M4 9.5h5" stroke="#9890D8" stroke-width="0.9"/><path d="M0 9.5h13v5H0z" fill="url(#g14)"/></svg>
<div class="t" style="left:393.12px;top:531px;font-size:12px;font-weight:400;line-height:14px;transform:scaleX(0.8798);color:#2255FF;text-decoration:underline">Private Individual Disablement Information</div>
<svg style="left:378px;top:530px" width="13" height="15" viewBox="0 0 13 15"><defs><linearGradient id="g15" x1="0" y1="0" x2="0" y2="1"><stop offset="0" stop-color="#FFE040"/><stop offset="1" stop-color="#D89820"/></linearGradient></defs><rect x="0" y="3.5" width="1.6" height="11" fill="#F0B830"/><rect x="11.4" y="3.5" width="1.6" height="11" fill="#F0B830"/><path d="M1.5 0.5h4.5l0.8 1h5.2v9h-10.5z" fill="#7888A8"/><rect x="2.3" y="1.5" width="3" height="1.2" fill="#E8ECF4"/><rect x="2.3" y="3.5" width="3" height="1.2" fill="#E8ECF4"/><rect x="6" y="2.7" width="5" height="1" fill="#E8ECF4"/><rect x="6" y="4.6" width="5" height="1" fill="#E8ECF4"/><rect x="2.3" y="5.8" width="8.5" height="5" fill="#FAFAFF"/><path d="M3 7.5h6M4 9.5h5" stroke="#9890D8" stroke-width="0.9"/><path d="M0 9.5h13v5H0z" fill="url(#g15)"/></svg>
<div class="t" style="left:394.00px;top:555px;font-size:12px;font-weight:400;line-height:14px;transform:scaleX(0.8813);color:#2255FF;text-decoration:underline">Types of Employee Incomes</div>
<svg style="left:378px;top:554px" width="13" height="15" viewBox="0 0 13 15"><defs><linearGradient id="g16" x1="0" y1="0" x2="0" y2="1"><stop offset="0" stop-color="#FFE040"/><stop offset="1" stop-color="#D89820"/></linearGradient></defs><rect x="0" y="3.5" width="1.6" height="11" fill="#F0B830"/><rect x="11.4" y="3.5" width="1.6" height="11" fill="#F0B830"/><path d="M1.5 0.5h4.5l0.8 1h5.2v9h-10.5z" fill="#7888A8"/><rect x="2.3" y="1.5" width="3" height="1.2" fill="#E8ECF4"/><rect x="2.3" y="3.5" width="3" height="1.2" fill="#E8ECF4"/><rect x="6" y="2.7" width="5" height="1" fill="#E8ECF4"/><rect x="6" y="4.6" width="5" height="1" fill="#E8ECF4"/><rect x="2.3" y="5.8" width="8.5" height="5" fill="#FAFAFF"/><path d="M3 7.5h6M4 9.5h5" stroke="#9890D8" stroke-width="0.9"/><path d="M0 9.5h13v5H0z" fill="url(#g16)"/></svg>
<div class="t" style="left:743.12px;top:435px;font-size:12px;font-weight:400;line-height:14px;transform:scaleX(0.8832);color:#2255FF;text-decoration:underline">Individual Pay Lists</div>
<svg style="left:728px;top:436px" width="12" height="12" viewBox="0 0 12 12"><circle cx="6" cy="6" r="5.9" fill="#7088A8"/><path d="M6 6L6.00 0.70A5.3 5.3 0 0 1 11.30 6.00z" fill="#FF5040"/><path d="M6 6L11.30 6.00A5.3 5.3 0 0 1 6.00 11.30z" fill="#1038F0"/><path d="M6 6L6.00 11.30A5.3 5.3 0 0 1 1.41 3.35z" fill="#FFF050"/><path d="M6 6L1.41 3.35A5.3 5.3 0 0 1 6.00 0.70z" fill="#10A050"/></svg>
<div class="t" style="left:743.11px;top:459px;font-size:12px;font-weight:400;line-height:14px;transform:scaleX(0.8912);color:#2255FF;text-decoration:underline">Pay List after &quot;T-51&quot; Form</div>
<svg style="left:728px;top:460px" width="12" height="12" viewBox="0 0 12 12"><circle cx="6" cy="6" r="5.9" fill="#7088A8"/><path d="M6 6L6.00 0.70A5.3 5.3 0 0 1 11.30 6.00z" fill="#FF5040"/><path d="M6 6L11.30 6.00A5.3 5.3 0 0 1 6.00 11.30z" fill="#1038F0"/><path d="M6 6L6.00 11.30A5.3 5.3 0 0 1 1.41 3.35z" fill="#FFF050"/><path d="M6 6L1.41 3.35A5.3 5.3 0 0 1 6.00 0.70z" fill="#10A050"/></svg>
<div class="t" style="left:743.15px;top:483px;font-size:12px;font-weight:400;line-height:14px;transform:scaleX(0.8537);color:#2255FF;text-decoration:underline">Pay List (Free Form)</div>
<svg style="left:728px;top:484px" width="12" height="12" viewBox="0 0 12 12"><circle cx="6" cy="6" r="5.9" fill="#7088A8"/><path d="M6 6L6.00 0.70A5.3 5.3 0 0 1 11.30 6.00z" fill="#FF5040"/><path d="M6 6L11.30 6.00A5.3 5.3 0 0 1 6.00 11.30z" fill="#1038F0"/><path d="M6 6L6.00 11.30A5.3 5.3 0 0 1 1.41 3.35z" fill="#FFF050"/><path d="M6 6L1.41 3.35A5.3 5.3 0 0 1 6.00 0.70z" fill="#10A050"/></svg>
<div class="t" style="left:743.13px;top:507px;font-size:12px;font-weight:400;line-height:14px;transform:scaleX(0.8685);color:#2255FF;text-decoration:underline">Structure of Payroll Arrears</div>
<svg style="left:728px;top:508px" width="12" height="12" viewBox="0 0 12 12"><circle cx="6" cy="6" r="5.9" fill="#7088A8"/><path d="M6 6L6.00 0.70A5.3 5.3 0 0 1 11.30 6.00z" fill="#FF5040"/><path d="M6 6L11.30 6.00A5.3 5.3 0 0 1 6.00 11.30z" fill="#1038F0"/><path d="M6 6L6.00 11.30A5.3 5.3 0 0 1 1.41 3.35z" fill="#FFF050"/><path d="M6 6L1.41 3.35A5.3 5.3 0 0 1 6.00 0.70z" fill="#10A050"/></svg>
<div class="t" style="left:743.12px;top:531px;font-size:12px;font-weight:400;line-height:14px;transform:scaleX(0.8815);color:#2255FF;text-decoration:underline">Unpaid Payroll Book</div>
<svg style="left:728px;top:532px" width="12" height="12" viewBox="0 0 12 12"><circle cx="6" cy="6" r="5.9" fill="#7088A8"/><path d="M6 6L6.00 0.70A5.3 5.3 0 0 1 11.30 6.00z" fill="#FF5040"/><path d="M6 6L11.30 6.00A5.3 5.3 0 0 1 6.00 11.30z" fill="#1038F0"/><path d="M6 6L6.00 11.30A5.3 5.3 0 0 1 1.41 3.35z" fill="#FFF050"/><path d="M6 6L1.41 3.35A5.3 5.3 0 0 1 6.00 0.70z" fill="#10A050"/></svg>
<div class="t" style="left:744.00px;top:555px;font-size:12px;font-weight:400;line-height:14px;transform:scaleX(0.8974);color:#2255FF;text-decoration:underline">Turnovers &amp; Balances of Account 70</div>
<svg style="left:728px;top:556px" width="12" height="12" viewBox="0 0 12 12"><circle cx="6" cy="6" r="5.9" fill="#7088A8"/><path d="M6 6L6.00 0.70A5.3 5.3 0 0 1 11.30 6.00z" fill="#FF5040"/><path d="M6 6L11.30 6.00A5.3 5.3 0 0 1 6.00 11.30z" fill="#1038F0"/><path d="M6 6L6.00 11.30A5.3 5.3 0 0 1 1.41 3.35z" fill="#FFF050"/><path d="M6 6L1.41 3.35A5.3 5.3 0 0 1 6.00 0.70z" fill="#10A050"/></svg>
<div class="t" style="left:743.10px;top:579px;font-size:12px;font-weight:400;line-height:14px;transform:scaleX(0.8957);color:#2255FF;text-decoration:underline">PIT Card</div>
<svg style="left:728px;top:580px" width="12" height="12" viewBox="0 0 12 12"><circle cx="6" cy="6" r="5.9" fill="#7088A8"/><path d="M6 6L6.00 0.70A5.3 5.3 0 0 1 11.30 6.00z" fill="#FF5040"/><path d="M6 6L11.30 6.00A5.3 5.3 0 0 1 6.00 11.30z" fill="#1038F0"/><path d="M6 6L6.00 11.30A5.3 5.3 0 0 1 1.41 3.35z" fill="#FFF050"/><path d="M6 6L1.41 3.35A5.3 5.3 0 0 1 6.00 0.70z" fill="#10A050"/></svg>
<div class="t" style="left:743.12px;top:603px;font-size:12px;font-weight:400;line-height:14px;transform:scaleX(0.8843);color:#2255FF;text-decoration:underline">Personal UST Card</div>
<svg style="left:728px;top:604px" width="12" height="12" viewBox="0 0 12 12"><circle cx="6" cy="6" r="5.9" fill="#7088A8"/><path d="M6 6L6.00 0.70A5.3 5.3 0 0 1 11.30 6.00z" fill="#FF5040"/><path d="M6 6L11.30 6.00A5.3 5.3 0 0 1 6.00 11.30z" fill="#1038F0"/><path d="M6 6L6.00 11.30A5.3 5.3 0 0 1 1.41 3.35z" fill="#FFF050"/><path d="M6 6L1.41 3.35A5.3 5.3 0 0 1 6.00 0.70z" fill="#10A050"/></svg>
<div class="t" style="left:743.13px;top:627px;font-size:12px;font-weight:400;line-height:14px;transform:scaleX(0.8705);color:#2255FF;text-decoration:underline">Personal Pension Card</div>
<svg style="left:728px;top:628px" width="12" height="12" viewBox="0 0 12 12"><circle cx="6" cy="6" r="5.9" fill="#7088A8"/><path d="M6 6L6.00 0.70A5.3 5.3 0 0 1 11.30 6.00z" fill="#FF5040"/><path d="M6 6L11.30 6.00A5.3 5.3 0 0 1 6.00 11.30z" fill="#1038F0"/><path d="M6 6L6.00 11.30A5.3 5.3 0 0 1 1.41 3.35z" fill="#FFF050"/><path d="M6 6L1.41 3.35A5.3 5.3 0 0 1 6.00 0.70z" fill="#10A050"/></svg>
<div class="t" style="left:743.14px;top:651px;font-size:12px;font-weight:400;line-height:14px;transform:scaleX(0.8577);color:#2255FF;text-decoration:underline">Payroll Cost Analysis</div>
<svg style="left:728px;top:652px" width="12" height="12" viewBox="0 0 12 12"><circle cx="6" cy="6" r="5.9" fill="#7088A8"/><path d="M6 6L6.00 0.70A5.3 5.3 0 0 1 11.30 6.00z" fill="#FF5040"/><path d="M6 6L11.30 6.00A5.3 5.3 0 0 1 6.00 11.30z" fill="#1038F0"/><path d="M6 6L6.00 11.30A5.3 5.3 0 0 1 1.41 3.35z" fill="#FFF050"/><path d="M6 6L1.41 3.35A5.3 5.3 0 0 1 6.00 0.70z" fill="#10A050"/></svg>
<div style="left:5px;top:706px;width:172px;height:20px;background:#A39C82"></div>
<div style="left:6px;top:707px;width:170px;height:18px;background:#5B74AC"></div>
<div class="t" style="left:24.11px;top:709px;font-size:12px;font-weight:400;line-height:14px;transform:scaleX(0.8886);color:#FFFFFF;">Functional Panel</div>
<svg style="left:8px;top:709px" width="16" height="16" viewBox="0 0 16 16"><defs><linearGradient id="g17" x1="0" y1="0" x2="0" y2="1"><stop offset="0" stop-color="#4A8CF0"/><stop offset="1" stop-color="#1A50C0"/></linearGradient></defs><rect x="0" y="0" width="4" height="14" rx="0.6" fill="url(#g17)"/><rect x="5" y="0" width="4" height="14" rx="0.6" fill="url(#g17)"/><rect x="10" y="0" width="4" height="14" rx="0.6" fill="url(#g17)"/><rect x="1" y="2" width="2" height="8" fill="#D8F0FF"/><rect x="6" y="2" width="2" height="10" fill="#D8F0FF"/><rect x="11" y="2" width="2" height="8" fill="#D8F0FF"/><rect x="1" y="3" width="2" height="1" fill="#E07040"/><rect x="11" y="3" width="2" height="1" fill="#E07040"/><circle cx="1.5" cy="12" r="0.8" fill="#101010"/><path d="M10.8 10.8l3.6 3.6" stroke="#902800" stroke-width="2.4"/><path d="M11 11l3.2 3.2" stroke="#F8A040" stroke-width="1.2"/><circle cx="8" cy="7.6" r="3.5" fill="#D0ECFF" stroke="#B07420" stroke-width="1.3"/><path d="M7.2 5v3" stroke="#4090D0" stroke-width="0.8"/></svg>
<div style="left:4px;top:728px;width:965px;height:19px;border:1px solid #D5CEBD;box-sizing:border-box;background:#EEE7DF"></div>
<div style="left:974px;top:728px;width:29px;height:19px;border:1px solid #D5CEBD;box-sizing:border-box;background:#EEE7DF"></div>
<div style="left:1008px;top:728px;width:33px;height:19px;border:1px solid #D5CEBD;box-sizing:border-box;background:#EEE7DF"></div>
<div class="t" style="left:8.16px;top:731px;font-size:12px;font-weight:400;line-height:14px;transform:scaleX(0.8409);color:#000;">For help press F1</div>
<div class="t" style="left:976.08px;top:731px;font-size:12px;font-weight:400;line-height:14px;transform:scaleX(0.9217);color:#707070;">CAP</div>
<div class="t" style="left:1011.07px;top:731px;font-size:12px;font-weight:400;line-height:14px;transform:scaleX(0.9280);color:#707070;">NUM</div>
<svg style="left:1057px;top:735px" width="14" height="14" viewBox="0 0 14 14" shape-rendering="crispEdges"><path d="M13 1L1 13M13 5L5 13M13 9L9 13" stroke="#8E8770" stroke-width="1.5" shape-rendering="geometricPrecision"/></svg>
</body></html>
